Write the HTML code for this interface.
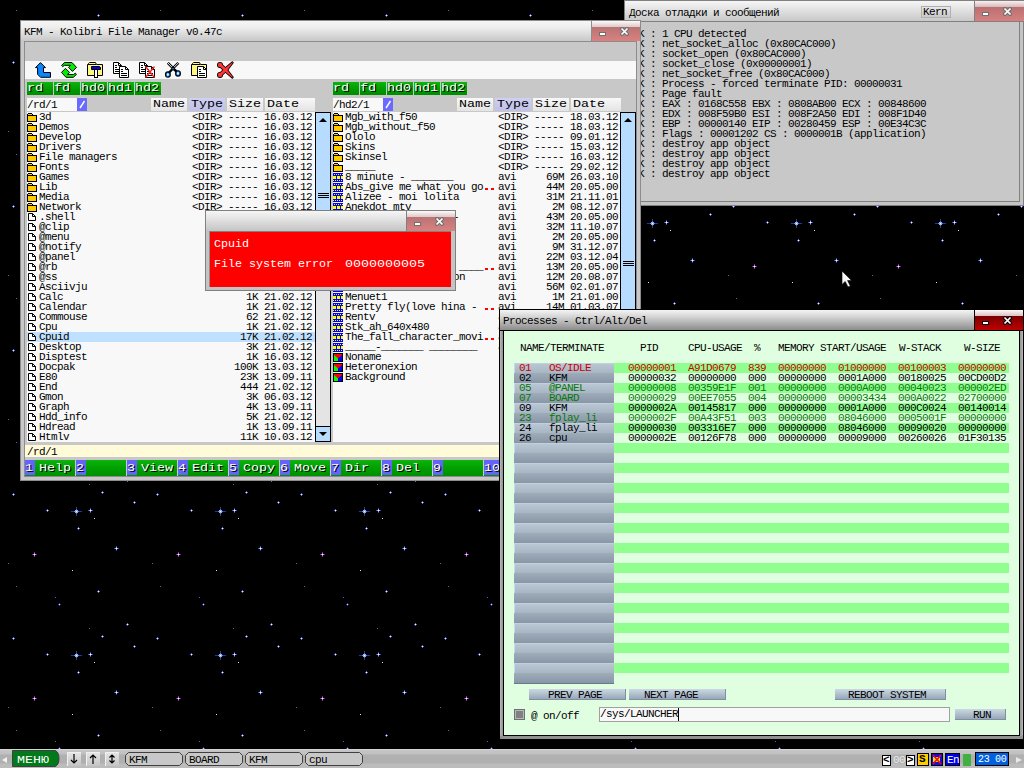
<!DOCTYPE html><html><head><meta charset="utf-8"><style>
html,body{margin:0;padding:0}
body{width:1024px;height:768px;position:relative;overflow:hidden;background:#000;font-family:"Liberation Mono",monospace;font-size:10px}
div{position:absolute;box-sizing:border-box}
.t{white-space:pre;line-height:11px;height:12px;font-size:11px;letter-spacing:-0.6px}
svg{position:absolute;display:block;overflow:visible}
.b8{color:#fff;transform:scaleX(1.3333);transform-origin:0 0;text-shadow:1px 1px 0 #000;font-size:10px;letter-spacing:0;line-height:12px}
.b7{color:#fff;transform:scaleX(1.1667);transform-origin:0 0;text-shadow:1px 1px 0 #000;font-size:10px;letter-spacing:0;line-height:12px}
</style></head><body>
<svg width="1024" height="768" style="left:0;top:0"><defs><pattern id="sky" x="0" y="0" width="144" height="144" patternUnits="userSpaceOnUse"><rect x="12" y="62" width="3" height="1" fill="#5a6ad0"/><rect x="13" y="61" width="1" height="3" fill="#5a6ad0"/><rect x="13" y="62" width="1" height="1" fill="#e8f0ff"/><rect x="89" y="52" width="1" height="1" fill="#7050c0"/><rect x="101" y="60" width="3" height="1" fill="#5a6ad0"/><rect x="102" y="59" width="1" height="3" fill="#5a6ad0"/><rect x="102" y="60" width="1" height="1" fill="#e8f0ff"/><rect x="133" y="70" width="3" height="1" fill="#5a6ad0"/><rect x="134" y="69" width="1" height="3" fill="#5a6ad0"/><rect x="134" y="70" width="1" height="1" fill="#e8f0ff"/><rect x="46" y="78" width="3" height="1" fill="#5a6ad0"/><rect x="47" y="77" width="1" height="3" fill="#5a6ad0"/><rect x="47" y="78" width="1" height="1" fill="#e8f0ff"/><rect x="71" y="79" width="11" height="1" fill="#283890"/><rect x="76" y="75" width="1" height="9" fill="#283890"/><rect x="74" y="79" width="5" height="1" fill="#6080e0"/><rect x="76" y="77" width="1" height="5" fill="#6080e0"/><rect x="75" y="78" width="3" height="3" fill="#90b0f0"/><rect x="76" y="79" width="1" height="1" fill="#f0f8ff"/><rect x="88" y="78" width="5" height="1" fill="#3a4ab0"/><rect x="90" y="76" width="1" height="5" fill="#3a4ab0"/><rect x="89" y="78" width="3" height="1" fill="#90b0ff"/><rect x="90" y="77" width="1" height="3" fill="#90b0ff"/><rect x="90" y="78" width="1" height="1" fill="#fff"/><rect x="94" y="86" width="1" height="1" fill="#e0e0ff"/><rect x="77" y="96" width="3" height="1" fill="#5a6ad0"/><rect x="78" y="95" width="1" height="3" fill="#5a6ad0"/><rect x="78" y="96" width="1" height="1" fill="#e8f0ff"/><rect x="114" y="116" width="5" height="1" fill="#3a4ab0"/><rect x="116" y="114" width="1" height="5" fill="#3a4ab0"/><rect x="115" y="116" width="3" height="1" fill="#90b0ff"/><rect x="116" y="115" width="1" height="3" fill="#90b0ff"/><rect x="116" y="116" width="1" height="1" fill="#fff"/><rect x="32" y="122" width="5" height="1" fill="#703090"/><rect x="34" y="120" width="1" height="5" fill="#703090"/><rect x="33" y="122" width="3" height="1" fill="#d080d0"/><rect x="34" y="121" width="1" height="3" fill="#d080d0"/><rect x="34" y="122" width="1" height="1" fill="#fff0ff"/><rect x="8" y="131" width="1" height="1" fill="#7050c0"/><rect x="72" y="138" width="1" height="1" fill="#e0e0ff"/><rect x="16" y="10" width="1" height="1" fill="#7050c0"/><rect x="97" y="15" width="3" height="1" fill="#5a6ad0"/><rect x="98" y="14" width="1" height="3" fill="#5a6ad0"/><rect x="98" y="15" width="1" height="1" fill="#e8f0ff"/><rect x="55" y="21" width="1" height="1" fill="#7050c0"/><rect x="58" y="28" width="3" height="1" fill="#5030a0"/><rect x="59" y="27" width="1" height="3" fill="#5030a0"/><rect x="59" y="28" width="1" height="1" fill="#d0c0ff"/><rect x="126" y="48" width="3" height="1" fill="#5a6ad0"/><rect x="127" y="47" width="1" height="3" fill="#5a6ad0"/><rect x="127" y="48" width="1" height="1" fill="#e8f0ff"/></pattern></defs><rect width="1024" height="768" fill="url(#sky)"/></svg>
<div style="left:624px;top:0px;width:400px;height:206px;background:#c4c4c4;border:1px solid #808080"></div>
<div style="left:625px;top:1px;width:399px;height:20px;background:linear-gradient(#f6f6f6,#e8e8e8 30%,#c8c8c8)"></div>
<div style="left:624px;top:21px;width:400px;height:1px;background:#808080"></div>
<div class="t" style="left:629px;top:8px;color:#000;">Доска отладки и сообщений</div>
<div style="left:921px;top:6px;width:30px;height:12px;background:linear-gradient(#e8e8e8,#c8c8c8);border:1px solid #b0b0b0"></div>
<div class="t" style="left:923px;top:7px;color:#000;">Kern</div>
<div style="left:975px;top:1px;width:49px;height:6px;background:linear-gradient(#f8f0f0,#d8b8b8)"></div>
<div style="left:975px;top:7px;width:49px;height:14px;background:linear-gradient(#b87070,#d88080)"></div>
<div style="left:974px;top:1px;width:1px;height:20px;background:#808080"></div>
<svg width="8" height="5" viewBox="0 0 8 5" style="left:982px;top:12px;"><rect x="0.5" y="0.5" width="6" height="3" fill="#fff" stroke="#707070"/></svg>
<svg width="9" height="9" viewBox="0 0 9 9" style="left:1003px;top:7px;overflow:hidden"><path d="M0.6,0.6 L8.4,8.4 M8.4,0.6 L0.6,8.4" stroke="#707070" stroke-width="3.6"/><path d="M1.5,1.5 L7.5,7.5 M7.5,1.5 L1.5,7.5" stroke="#fff" stroke-width="1.7"/></svg>
<div style="left:629px;top:22px;width:390px;height:179px;background:#c8c8c8"></div>
<div style="left:1019px;top:22px;width:1px;height:180px;background:#808080"></div>
<div style="left:629px;top:201px;width:391px;height:1px;background:#808080"></div>
<div class="t" style="left:638px;top:29px;color:#000;">K : 1 CPU detected</div>
<div class="t" style="left:638px;top:39px;color:#000;">K : net_socket_alloc (0x80CAC000)</div>
<div class="t" style="left:638px;top:49px;color:#000;">K : socket_open (0x80CAC000)</div>
<div class="t" style="left:638px;top:59px;color:#000;">K : socket_close (0x00000001)</div>
<div class="t" style="left:638px;top:69px;color:#000;">K : net_socket_free (0x80CAC000)</div>
<div class="t" style="left:638px;top:79px;color:#000;">K : Process - forced terminate PID: 00000031</div>
<div class="t" style="left:638px;top:89px;color:#000;">K : Page fault</div>
<div class="t" style="left:638px;top:99px;color:#000;">K : EAX : 0168C558 EBX : 0808AB00 ECX : 00848600</div>
<div class="t" style="left:638px;top:109px;color:#000;">K : EDX : 008F59B0 ESI : 008F2A50 EDI : 008F1D40</div>
<div class="t" style="left:638px;top:119px;color:#000;">K : EBP : 00000140 EIP : 00280459 ESP : 00E34C3C</div>
<div class="t" style="left:638px;top:129px;color:#000;">K : Flags : 00001202 CS : 0000001B (application)</div>
<div class="t" style="left:638px;top:139px;color:#000;">K : destroy app object</div>
<div class="t" style="left:638px;top:149px;color:#000;">K : destroy app object</div>
<div class="t" style="left:638px;top:159px;color:#000;">K : destroy app object</div>
<div class="t" style="left:638px;top:169px;color:#000;">K : destroy app object</div>
<div style="left:20px;top:20px;width:621px;height:461px;background:#c8c8c8;border:1px solid #8c8c8c"></div>
<div style="left:21px;top:21px;width:619px;height:20px;background:linear-gradient(#f6f6f6,#ececec 35%,#c8c8c8)"></div>
<div class="t" style="left:24px;top:27px;color:#000;">KFM - Kolibri File Manager v0.47c</div>
<div style="left:592px;top:21px;width:48px;height:6px;background:linear-gradient(#fafafa,#e0c8c8)"></div>
<div style="left:592px;top:27px;width:48px;height:14px;background:linear-gradient(#b87474,#dc8080)"></div>
<div style="left:591px;top:21px;width:1px;height:20px;background:#8c8c8c"></div>
<div style="left:24px;top:41px;width:613px;height:436px;border:1px solid #8c8c8c;background:#c8c8c8"></div>
<div style="left:25px;top:61px;width:611px;height:18px;background:#f8f8f8"></div>
<svg width="8" height="5" viewBox="0 0 8 5" style="left:599px;top:32px;"><rect x="0.5" y="0.5" width="6" height="3" fill="#fff" stroke="#707070"/></svg>
<svg width="9" height="9" viewBox="0 0 9 9" style="left:620px;top:27px;overflow:hidden"><path d="M0.6,0.6 L8.4,8.4 M8.4,0.6 L0.6,8.4" stroke="#707070" stroke-width="3.6"/><path d="M1.5,1.5 L7.5,7.5 M7.5,1.5 L1.5,7.5" stroke="#fff" stroke-width="1.7"/></svg>
<svg width="17" height="17" viewBox="0 0 17 17" style="left:35px;top:62px;"><path d="M5.5,0.6 L10.5,5.6 L8.5,5.6 L8.5,10.5 L15.5,10.5 L15.5,15.3 L5.6,15.3 L2.6,12.3 L2.6,5.6 L0.5,5.6 Z" fill="#0a84ff" stroke="#000" stroke-linejoin="miter"/></svg>
<svg width="17" height="17" viewBox="0 0 17 17" style="left:61px;top:62px;"><path d="M3.7,0.5 L11,0.5 L15.5,5.4 L11.5,9.4 L7.5,5.4 L9.6,3.3 L3.6,3.3 L1.6,4.6 L0.6,3.3 Z" fill="#00f000" stroke="#000" stroke-linejoin="miter"/><path d="M12.3,15.3 L5,15.3 L0.5,10.4 L4.5,6.4 L8.5,10.4 L6.4,12.5 L12.4,12.5 L14.4,11.2 L15.4,12.5 Z" fill="#00f000" stroke="#000" stroke-linejoin="miter"/></svg>
<svg width="17" height="17" viewBox="0 0 17 17" style="left:87px;top:62px;"><path d="M2.5,0.5 H8.5 L9.5,2.5 H15.5 V13.5 H0.5 V2.5 L1.5,1.5 Z" fill="#fff880" stroke="#000"/><path d="M1,2.5 H9" stroke="#000"/><path d="M4.5,4.5 H12.5 L13.5,5.5 V7.5 H4.5 Z" fill="#0000f0" stroke="#000"/><rect x="7.5" y="7.5" width="3" height="8" fill="#fff" stroke="#000"/></svg>
<svg width="17" height="17" viewBox="0 0 17 17" style="left:113px;top:62px;"><path d="M0.5,0.5 L5.5,0.5 L8.5,3.5 L8.5,11.5 L0.5,11.5 Z" fill="#fff" stroke="#000"/><path d="M5.5,0.5 L5.5,3.5 L8.5,3.5" fill="none" stroke="#000"/><path d="M2,3.5 h2 M2,5.5 h2 M2,7.5 h5 M2,9.5 h5" stroke="#000"/><path d="M6.5,4.5 L12.5,4.5 L15.5,7.5 L15.5,15.5 L6.5,15.5 Z" fill="#fff" stroke="#000"/><path d="M12.5,4.5 L12.5,7.5 L15.5,7.5" fill="none" stroke="#000"/><path d="M8,7.5 h2 M8,9.5 h2 M8,11.5 h6 M8,13.5 h6" stroke="#000"/></svg>
<svg width="17" height="17" viewBox="0 0 17 17" style="left:139px;top:62px;"><path d="M0.5,0.5 L5.5,0.5 L8.5,3.5 L8.5,11.5 L0.5,11.5 Z" fill="#fff" stroke="#000"/><path d="M5.5,0.5 L5.5,3.5 L8.5,3.5" fill="none" stroke="#000"/><path d="M2,3.5 h2 M2,5.5 h2 M2,7.5 h5 M2,9.5 h5" stroke="#000"/><path d="M6.5,4.5 L12.5,4.5 L15.5,7.5 L15.5,15.5 L6.5,15.5 Z" fill="#fff" stroke="#000"/><path d="M12.5,4.5 L12.5,7.5 L15.5,7.5" fill="none" stroke="#000"/><path d="M8,7.5 h2 M8,9.5 h2 M8,11.5 h6 M8,13.5 h6" stroke="#000"/><path d="M6.5,15.5 L15.5,4.5 M6.5,4.5 L15.5,15.5" stroke="#ff2020" stroke-width="1.3"/></svg>
<svg width="17" height="17" viewBox="0 0 17 17" style="left:165px;top:62px;"><path d="M2.8,0.8 L8,6.2 L13.4,0.8" fill="none" stroke="#000" stroke-width="2.6"/><path d="M2.8,0.8 L8,6.2 L13.4,0.8" fill="none" stroke="#fff" stroke-width="0.9"/><path d="M8,6.5 L3.2,11.5 M8,6.5 L12.8,10.5" stroke="#000" stroke-width="2.4"/><rect x="7" y="5" width="2" height="2.2" fill="#000"/><rect x="7" y="6.3" width="2" height="1" fill="#1088ff"/><ellipse cx="2.9" cy="12.6" rx="2.4" ry="2.7" fill="#1088ff" stroke="#000" stroke-width="1.1"/><ellipse cx="13" cy="11.4" rx="2.4" ry="2.7" fill="#1088ff" stroke="#000" stroke-width="1.1"/><ellipse cx="2.9" cy="12.6" rx="0.9" ry="1.4" fill="#fff"/><ellipse cx="13" cy="11.4" rx="0.9" ry="1.4" fill="#fff"/></svg>
<svg width="17" height="17" viewBox="0 0 17 17" style="left:191px;top:62px;"><path d="M2.5,0.5 H8.5 L9.5,2.5 H15.5 V13.5 H0.5 V2.5 L1.5,1.5 Z" fill="#fff880" stroke="#000"/><path d="M1,2.5 H9" stroke="#000"/><path d="M6.5,4.5 L12.5,4.5 L15.5,7.5 L15.5,15.5 L6.5,15.5 Z" fill="#fff" stroke="#000"/><path d="M12.5,4.5 L12.5,7.5 L15.5,7.5" fill="none" stroke="#000"/><path d="M8,7.5 h2 M8,9.5 h2 M8,11.5 h6 M8,13.5 h6" stroke="#000"/></svg>
<svg width="17" height="17" viewBox="0 0 17 17" style="left:217px;top:62px;"><path d="M3,2.8 L8.5,7.9 L3,13" fill="none" stroke="#000" stroke-width="4.4"/><circle cx="3" cy="2.9" r="3" fill="#000"/><circle cx="3" cy="12.9" r="3" fill="#000"/><path d="M7.41,6.87 L15.31,0.13 L15.89,0.67 L9.59,8.93 Z M9.60,6.88 L15.89,15.33 L15.31,15.87 L7.40,8.92 Z" fill="#000" stroke="#000" stroke-width="1.6" stroke-linejoin="round"/><path d="M3,2.8 L8.5,7.9 L3,13" fill="none" stroke="#ff3434" stroke-width="2.8"/><circle cx="3" cy="2.9" r="2.2" fill="#ff3434"/><circle cx="3" cy="12.9" r="2.2" fill="#ff3434"/><path d="M7.41,6.87 L15.31,0.13 L15.89,0.67 L9.59,8.93 Z M9.60,6.88 L15.89,15.33 L15.31,15.87 L7.40,8.92 Z" fill="#ff3434"/></svg>
<div style="left:27px;top:82px;width:26px;height:13px;background:linear-gradient(#0cb40c,#009a00 60%,#008c00)"></div>
<div class="t b8" style="left:27px;top:83px">rd</div>
<div style="left:54px;top:82px;width:26px;height:13px;background:linear-gradient(#0cb40c,#009a00 60%,#008c00)"></div>
<div class="t b8" style="left:54px;top:83px">fd</div>
<div style="left:81px;top:82px;width:26px;height:13px;background:linear-gradient(#0cb40c,#009a00 60%,#008c00)"></div>
<div class="t b8" style="left:81px;top:83px">hd0</div>
<div style="left:108px;top:82px;width:26px;height:13px;background:linear-gradient(#0cb40c,#009a00 60%,#008c00)"></div>
<div class="t b8" style="left:108px;top:83px">hd1</div>
<div style="left:135px;top:82px;width:26px;height:13px;background:linear-gradient(#0cb40c,#009a00 60%,#008c00)"></div>
<div class="t b8" style="left:135px;top:83px">hd2</div>
<div style="left:27px;top:98px;width:50px;height:13px;background:#f8f8f8"></div>
<div class="t" style="left:27px;top:100px;color:#000;">/rd/1</div>
<div style="left:77px;top:98px;width:10px;height:13px;background:#6a6aff"></div>
<svg width="7" height="9" viewBox="0 0 7 9" style="left:79px;top:100px;"><path d="M1,8 L5.5,1" stroke="#fff" stroke-width="1.4"/></svg>
<div style="left:151px;top:98px;width:37px;height:13px;background:linear-gradient(#f8f8f8,#e4e4e4);border-right:1px solid #c8c8c8"></div>
<div class="t b8" style="left:153px;top:99px;color:#000;text-shadow:none">Name</div>
<div style="left:189px;top:98px;width:37px;height:13px;background:linear-gradient(#d0d0f4,#c0c0e8);border-right:1px solid #c8c8c8"></div>
<div class="t b8" style="left:191px;top:99px;color:#000;text-shadow:none">Type</div>
<div style="left:227px;top:98px;width:37px;height:13px;background:linear-gradient(#f8f8f8,#e4e4e4);border-right:1px solid #c8c8c8"></div>
<div class="t b8" style="left:229px;top:99px;color:#000;text-shadow:none">Size</div>
<div style="left:265px;top:98px;width:51px;height:13px;background:linear-gradient(#f8f8f8,#e4e4e4);border-right:1px solid #c8c8c8"></div>
<div class="t b8" style="left:267px;top:99px;color:#000;text-shadow:none">Date</div>
<div style="left:27px;top:112px;width:288px;height:330px;background:#f8f8f8"></div>
<div style="left:315px;top:112px;width:16px;height:330px;background:#e4e4e4;border-left:1px solid #000;border-right:1px solid #000"></div>
<div style="left:315px;top:112px;width:16px;height:16px;background:#b8dcff;border:1px solid #000"></div>
<svg width="10" height="6" viewBox="0 0 10 6" style="left:318px;top:117px;"><path d="M1,5 L5,1 L9,5 Z" fill="#000"/></svg>
<div style="left:315px;top:127px;width:16px;height:136px;background:#b8dcff;border:1px solid #000;border-top:none"></div>
<div style="left:318px;top:193px;width:11px;height:1px;background:#000"></div>
<div style="left:318px;top:195px;width:11px;height:1px;background:#000"></div>
<div style="left:318px;top:197px;width:11px;height:1px;background:#000"></div>
<div style="left:315px;top:426px;width:16px;height:16px;background:#b8dcff;border:1px solid #000"></div>
<svg width="10" height="6" viewBox="0 0 10 6" style="left:318px;top:431px;"><path d="M1,1 L5,5 L9,1 Z" fill="#000"/></svg>
<svg width="10" height="9" viewBox="0 0 10 9" style="left:27px;top:113px;"><rect x="1" y="0" width="4" height="1" fill="#000"/><rect x="0" y="1" width="6" height="1" fill="#000"/><rect x="1" y="1" width="4" height="1" fill="#ffcc00"/><rect x="0" y="2" width="10" height="7" fill="#000"/><rect x="1" y="3" width="8" height="5" fill="#ffcc00"/></svg>
<div class="t" style="left:39px;top:112px;color:#000;">3d</div>
<div class="t" style="left:192px;top:112px;color:#000;">&lt;DIR&gt;</div>
<div class="t" style="left:228px;top:112px;color:#000;">-----</div>
<div class="t" style="left:264px;top:112px;color:#000;">16.03.12</div>
<svg width="10" height="9" viewBox="0 0 10 9" style="left:27px;top:123px;"><rect x="1" y="0" width="4" height="1" fill="#000"/><rect x="0" y="1" width="6" height="1" fill="#000"/><rect x="1" y="1" width="4" height="1" fill="#ffcc00"/><rect x="0" y="2" width="10" height="7" fill="#000"/><rect x="1" y="3" width="8" height="5" fill="#ffcc00"/></svg>
<div class="t" style="left:39px;top:122px;color:#000;">Demos</div>
<div class="t" style="left:192px;top:122px;color:#000;">&lt;DIR&gt;</div>
<div class="t" style="left:228px;top:122px;color:#000;">-----</div>
<div class="t" style="left:264px;top:122px;color:#000;">16.03.12</div>
<svg width="10" height="9" viewBox="0 0 10 9" style="left:27px;top:133px;"><rect x="1" y="0" width="4" height="1" fill="#000"/><rect x="0" y="1" width="6" height="1" fill="#000"/><rect x="1" y="1" width="4" height="1" fill="#ffcc00"/><rect x="0" y="2" width="10" height="7" fill="#000"/><rect x="1" y="3" width="8" height="5" fill="#ffcc00"/></svg>
<div class="t" style="left:39px;top:132px;color:#000;">Develop</div>
<div class="t" style="left:192px;top:132px;color:#000;">&lt;DIR&gt;</div>
<div class="t" style="left:228px;top:132px;color:#000;">-----</div>
<div class="t" style="left:264px;top:132px;color:#000;">16.03.12</div>
<svg width="10" height="9" viewBox="0 0 10 9" style="left:27px;top:143px;"><rect x="1" y="0" width="4" height="1" fill="#000"/><rect x="0" y="1" width="6" height="1" fill="#000"/><rect x="1" y="1" width="4" height="1" fill="#ffcc00"/><rect x="0" y="2" width="10" height="7" fill="#000"/><rect x="1" y="3" width="8" height="5" fill="#ffcc00"/></svg>
<div class="t" style="left:39px;top:142px;color:#000;">Drivers</div>
<div class="t" style="left:192px;top:142px;color:#000;">&lt;DIR&gt;</div>
<div class="t" style="left:228px;top:142px;color:#000;">-----</div>
<div class="t" style="left:264px;top:142px;color:#000;">16.03.12</div>
<svg width="10" height="9" viewBox="0 0 10 9" style="left:27px;top:153px;"><rect x="1" y="0" width="4" height="1" fill="#000"/><rect x="0" y="1" width="6" height="1" fill="#000"/><rect x="1" y="1" width="4" height="1" fill="#ffcc00"/><rect x="0" y="2" width="10" height="7" fill="#000"/><rect x="1" y="3" width="8" height="5" fill="#ffcc00"/></svg>
<div class="t" style="left:39px;top:152px;color:#000;">File managers</div>
<div class="t" style="left:192px;top:152px;color:#000;">&lt;DIR&gt;</div>
<div class="t" style="left:228px;top:152px;color:#000;">-----</div>
<div class="t" style="left:264px;top:152px;color:#000;">16.03.12</div>
<svg width="10" height="9" viewBox="0 0 10 9" style="left:27px;top:163px;"><rect x="1" y="0" width="4" height="1" fill="#000"/><rect x="0" y="1" width="6" height="1" fill="#000"/><rect x="1" y="1" width="4" height="1" fill="#ffcc00"/><rect x="0" y="2" width="10" height="7" fill="#000"/><rect x="1" y="3" width="8" height="5" fill="#ffcc00"/></svg>
<div class="t" style="left:39px;top:162px;color:#000;">Fonts</div>
<div class="t" style="left:192px;top:162px;color:#000;">&lt;DIR&gt;</div>
<div class="t" style="left:228px;top:162px;color:#000;">-----</div>
<div class="t" style="left:264px;top:162px;color:#000;">16.03.12</div>
<svg width="10" height="9" viewBox="0 0 10 9" style="left:27px;top:173px;"><rect x="1" y="0" width="4" height="1" fill="#000"/><rect x="0" y="1" width="6" height="1" fill="#000"/><rect x="1" y="1" width="4" height="1" fill="#ffcc00"/><rect x="0" y="2" width="10" height="7" fill="#000"/><rect x="1" y="3" width="8" height="5" fill="#ffcc00"/></svg>
<div class="t" style="left:39px;top:172px;color:#000;">Games</div>
<div class="t" style="left:192px;top:172px;color:#000;">&lt;DIR&gt;</div>
<div class="t" style="left:228px;top:172px;color:#000;">-----</div>
<div class="t" style="left:264px;top:172px;color:#000;">16.03.12</div>
<svg width="10" height="9" viewBox="0 0 10 9" style="left:27px;top:183px;"><rect x="1" y="0" width="4" height="1" fill="#000"/><rect x="0" y="1" width="6" height="1" fill="#000"/><rect x="1" y="1" width="4" height="1" fill="#ffcc00"/><rect x="0" y="2" width="10" height="7" fill="#000"/><rect x="1" y="3" width="8" height="5" fill="#ffcc00"/></svg>
<div class="t" style="left:39px;top:182px;color:#000;">Lib</div>
<div class="t" style="left:192px;top:182px;color:#000;">&lt;DIR&gt;</div>
<div class="t" style="left:228px;top:182px;color:#000;">-----</div>
<div class="t" style="left:264px;top:182px;color:#000;">16.03.12</div>
<svg width="10" height="9" viewBox="0 0 10 9" style="left:27px;top:193px;"><rect x="1" y="0" width="4" height="1" fill="#000"/><rect x="0" y="1" width="6" height="1" fill="#000"/><rect x="1" y="1" width="4" height="1" fill="#ffcc00"/><rect x="0" y="2" width="10" height="7" fill="#000"/><rect x="1" y="3" width="8" height="5" fill="#ffcc00"/></svg>
<div class="t" style="left:39px;top:192px;color:#000;">Media</div>
<div class="t" style="left:192px;top:192px;color:#000;">&lt;DIR&gt;</div>
<div class="t" style="left:228px;top:192px;color:#000;">-----</div>
<div class="t" style="left:264px;top:192px;color:#000;">16.03.12</div>
<svg width="10" height="9" viewBox="0 0 10 9" style="left:27px;top:203px;"><rect x="1" y="0" width="4" height="1" fill="#000"/><rect x="0" y="1" width="6" height="1" fill="#000"/><rect x="1" y="1" width="4" height="1" fill="#ffcc00"/><rect x="0" y="2" width="10" height="7" fill="#000"/><rect x="1" y="3" width="8" height="5" fill="#ffcc00"/></svg>
<div class="t" style="left:39px;top:202px;color:#000;">Network</div>
<div class="t" style="left:192px;top:202px;color:#000;">&lt;DIR&gt;</div>
<div class="t" style="left:228px;top:202px;color:#000;">-----</div>
<div class="t" style="left:264px;top:202px;color:#000;">16.03.12</div>
<svg width="8" height="8" viewBox="0 0 8 8" style="left:28px;top:213px;"><path d="M0.5,0.5 L4.5,0.5 L7.5,3.5 L7.5,7.5 L0.5,7.5 Z" fill="#fff" stroke="#000" stroke-linejoin="miter"/><path d="M4.5,0.5 L4.5,3.5 L7.5,3.5" fill="none" stroke="#000"/></svg>
<div class="t" style="left:39px;top:212px;color:#000;">.shell</div>
<svg width="8" height="8" viewBox="0 0 8 8" style="left:28px;top:223px;"><path d="M0.5,0.5 L4.5,0.5 L7.5,3.5 L7.5,7.5 L0.5,7.5 Z" fill="#fff" stroke="#000" stroke-linejoin="miter"/><path d="M4.5,0.5 L4.5,3.5 L7.5,3.5" fill="none" stroke="#000"/></svg>
<div class="t" style="left:39px;top:222px;color:#000;">@clip</div>
<svg width="8" height="8" viewBox="0 0 8 8" style="left:28px;top:233px;"><path d="M0.5,0.5 L4.5,0.5 L7.5,3.5 L7.5,7.5 L0.5,7.5 Z" fill="#fff" stroke="#000" stroke-linejoin="miter"/><path d="M4.5,0.5 L4.5,3.5 L7.5,3.5" fill="none" stroke="#000"/></svg>
<div class="t" style="left:39px;top:232px;color:#000;">@menu</div>
<svg width="8" height="8" viewBox="0 0 8 8" style="left:28px;top:243px;"><path d="M0.5,0.5 L4.5,0.5 L7.5,3.5 L7.5,7.5 L0.5,7.5 Z" fill="#fff" stroke="#000" stroke-linejoin="miter"/><path d="M4.5,0.5 L4.5,3.5 L7.5,3.5" fill="none" stroke="#000"/></svg>
<div class="t" style="left:39px;top:242px;color:#000;">@notify</div>
<svg width="8" height="8" viewBox="0 0 8 8" style="left:28px;top:253px;"><path d="M0.5,0.5 L4.5,0.5 L7.5,3.5 L7.5,7.5 L0.5,7.5 Z" fill="#fff" stroke="#000" stroke-linejoin="miter"/><path d="M4.5,0.5 L4.5,3.5 L7.5,3.5" fill="none" stroke="#000"/></svg>
<div class="t" style="left:39px;top:252px;color:#000;">@panel</div>
<svg width="8" height="8" viewBox="0 0 8 8" style="left:28px;top:263px;"><path d="M0.5,0.5 L4.5,0.5 L7.5,3.5 L7.5,7.5 L0.5,7.5 Z" fill="#fff" stroke="#000" stroke-linejoin="miter"/><path d="M4.5,0.5 L4.5,3.5 L7.5,3.5" fill="none" stroke="#000"/></svg>
<div class="t" style="left:39px;top:262px;color:#000;">@rb</div>
<svg width="8" height="8" viewBox="0 0 8 8" style="left:28px;top:273px;"><path d="M0.5,0.5 L4.5,0.5 L7.5,3.5 L7.5,7.5 L0.5,7.5 Z" fill="#fff" stroke="#000" stroke-linejoin="miter"/><path d="M4.5,0.5 L4.5,3.5 L7.5,3.5" fill="none" stroke="#000"/></svg>
<div class="t" style="left:39px;top:272px;color:#000;">@ss</div>
<svg width="8" height="8" viewBox="0 0 8 8" style="left:28px;top:283px;"><path d="M0.5,0.5 L4.5,0.5 L7.5,3.5 L7.5,7.5 L0.5,7.5 Z" fill="#fff" stroke="#000" stroke-linejoin="miter"/><path d="M4.5,0.5 L4.5,3.5 L7.5,3.5" fill="none" stroke="#000"/></svg>
<div class="t" style="left:39px;top:282px;color:#000;">Asciivju</div>
<svg width="8" height="8" viewBox="0 0 8 8" style="left:28px;top:293px;"><path d="M0.5,0.5 L4.5,0.5 L7.5,3.5 L7.5,7.5 L0.5,7.5 Z" fill="#fff" stroke="#000" stroke-linejoin="miter"/><path d="M4.5,0.5 L4.5,3.5 L7.5,3.5" fill="none" stroke="#000"/></svg>
<div class="t" style="left:39px;top:292px;color:#000;">Calc</div>
<div class="t" style="left:228px;top:292px;color:#000;">   1K</div>
<div class="t" style="left:264px;top:292px;color:#000;">21.02.12</div>
<svg width="8" height="8" viewBox="0 0 8 8" style="left:28px;top:303px;"><path d="M0.5,0.5 L4.5,0.5 L7.5,3.5 L7.5,7.5 L0.5,7.5 Z" fill="#fff" stroke="#000" stroke-linejoin="miter"/><path d="M4.5,0.5 L4.5,3.5 L7.5,3.5" fill="none" stroke="#000"/></svg>
<div class="t" style="left:39px;top:302px;color:#000;">Calendar</div>
<div class="t" style="left:228px;top:302px;color:#000;">   1K</div>
<div class="t" style="left:264px;top:302px;color:#000;">21.02.12</div>
<svg width="8" height="8" viewBox="0 0 8 8" style="left:28px;top:313px;"><path d="M0.5,0.5 L4.5,0.5 L7.5,3.5 L7.5,7.5 L0.5,7.5 Z" fill="#fff" stroke="#000" stroke-linejoin="miter"/><path d="M4.5,0.5 L4.5,3.5 L7.5,3.5" fill="none" stroke="#000"/></svg>
<div class="t" style="left:39px;top:312px;color:#000;">Commouse</div>
<div class="t" style="left:228px;top:312px;color:#000;">   62</div>
<div class="t" style="left:264px;top:312px;color:#000;">21.02.12</div>
<svg width="8" height="8" viewBox="0 0 8 8" style="left:28px;top:323px;"><path d="M0.5,0.5 L4.5,0.5 L7.5,3.5 L7.5,7.5 L0.5,7.5 Z" fill="#fff" stroke="#000" stroke-linejoin="miter"/><path d="M4.5,0.5 L4.5,3.5 L7.5,3.5" fill="none" stroke="#000"/></svg>
<div class="t" style="left:39px;top:322px;color:#000;">Cpu</div>
<div class="t" style="left:228px;top:322px;color:#000;">   1K</div>
<div class="t" style="left:264px;top:322px;color:#000;">21.02.12</div>
<div style="left:27px;top:332px;width:288px;height:10px;background:#c0e0ff"></div>
<svg width="8" height="8" viewBox="0 0 8 8" style="left:28px;top:333px;"><path d="M0.5,0.5 L4.5,0.5 L7.5,3.5 L7.5,7.5 L0.5,7.5 Z" fill="#fff" stroke="#000" stroke-linejoin="miter"/><path d="M4.5,0.5 L4.5,3.5 L7.5,3.5" fill="none" stroke="#000"/></svg>
<div class="t" style="left:39px;top:332px;color:#000;">Cpuid</div>
<div class="t" style="left:228px;top:332px;color:#000;">  17K</div>
<div class="t" style="left:264px;top:332px;color:#000;">21.02.12</div>
<svg width="8" height="8" viewBox="0 0 8 8" style="left:28px;top:343px;"><path d="M0.5,0.5 L4.5,0.5 L7.5,3.5 L7.5,7.5 L0.5,7.5 Z" fill="#fff" stroke="#000" stroke-linejoin="miter"/><path d="M4.5,0.5 L4.5,3.5 L7.5,3.5" fill="none" stroke="#000"/></svg>
<div class="t" style="left:39px;top:342px;color:#000;">Desktop</div>
<div class="t" style="left:228px;top:342px;color:#000;">   3K</div>
<div class="t" style="left:264px;top:342px;color:#000;">21.02.12</div>
<svg width="8" height="8" viewBox="0 0 8 8" style="left:28px;top:353px;"><path d="M0.5,0.5 L4.5,0.5 L7.5,3.5 L7.5,7.5 L0.5,7.5 Z" fill="#fff" stroke="#000" stroke-linejoin="miter"/><path d="M4.5,0.5 L4.5,3.5 L7.5,3.5" fill="none" stroke="#000"/></svg>
<div class="t" style="left:39px;top:352px;color:#000;">Disptest</div>
<div class="t" style="left:228px;top:352px;color:#000;">   1K</div>
<div class="t" style="left:264px;top:352px;color:#000;">16.03.12</div>
<svg width="8" height="8" viewBox="0 0 8 8" style="left:28px;top:363px;"><path d="M0.5,0.5 L4.5,0.5 L7.5,3.5 L7.5,7.5 L0.5,7.5 Z" fill="#fff" stroke="#000" stroke-linejoin="miter"/><path d="M4.5,0.5 L4.5,3.5 L7.5,3.5" fill="none" stroke="#000"/></svg>
<div class="t" style="left:39px;top:362px;color:#000;">Docpak</div>
<div class="t" style="left:228px;top:362px;color:#000;"> 100K</div>
<div class="t" style="left:264px;top:362px;color:#000;">13.03.12</div>
<svg width="8" height="8" viewBox="0 0 8 8" style="left:28px;top:373px;"><path d="M0.5,0.5 L4.5,0.5 L7.5,3.5 L7.5,7.5 L0.5,7.5 Z" fill="#fff" stroke="#000" stroke-linejoin="miter"/><path d="M4.5,0.5 L4.5,3.5 L7.5,3.5" fill="none" stroke="#000"/></svg>
<div class="t" style="left:39px;top:372px;color:#000;">E80</div>
<div class="t" style="left:228px;top:372px;color:#000;">  23K</div>
<div class="t" style="left:264px;top:372px;color:#000;">13.09.11</div>
<svg width="8" height="8" viewBox="0 0 8 8" style="left:28px;top:383px;"><path d="M0.5,0.5 L4.5,0.5 L7.5,3.5 L7.5,7.5 L0.5,7.5 Z" fill="#fff" stroke="#000" stroke-linejoin="miter"/><path d="M4.5,0.5 L4.5,3.5 L7.5,3.5" fill="none" stroke="#000"/></svg>
<div class="t" style="left:39px;top:382px;color:#000;">End</div>
<div class="t" style="left:228px;top:382px;color:#000;">  444</div>
<div class="t" style="left:264px;top:382px;color:#000;">21.02.12</div>
<svg width="8" height="8" viewBox="0 0 8 8" style="left:28px;top:393px;"><path d="M0.5,0.5 L4.5,0.5 L7.5,3.5 L7.5,7.5 L0.5,7.5 Z" fill="#fff" stroke="#000" stroke-linejoin="miter"/><path d="M4.5,0.5 L4.5,3.5 L7.5,3.5" fill="none" stroke="#000"/></svg>
<div class="t" style="left:39px;top:392px;color:#000;">Gmon</div>
<div class="t" style="left:228px;top:392px;color:#000;">   3K</div>
<div class="t" style="left:264px;top:392px;color:#000;">06.03.12</div>
<svg width="8" height="8" viewBox="0 0 8 8" style="left:28px;top:403px;"><path d="M0.5,0.5 L4.5,0.5 L7.5,3.5 L7.5,7.5 L0.5,7.5 Z" fill="#fff" stroke="#000" stroke-linejoin="miter"/><path d="M4.5,0.5 L4.5,3.5 L7.5,3.5" fill="none" stroke="#000"/></svg>
<div class="t" style="left:39px;top:402px;color:#000;">Graph</div>
<div class="t" style="left:228px;top:402px;color:#000;">   4K</div>
<div class="t" style="left:264px;top:402px;color:#000;">13.09.11</div>
<svg width="8" height="8" viewBox="0 0 8 8" style="left:28px;top:413px;"><path d="M0.5,0.5 L4.5,0.5 L7.5,3.5 L7.5,7.5 L0.5,7.5 Z" fill="#fff" stroke="#000" stroke-linejoin="miter"/><path d="M4.5,0.5 L4.5,3.5 L7.5,3.5" fill="none" stroke="#000"/></svg>
<div class="t" style="left:39px;top:412px;color:#000;">Hdd_info</div>
<div class="t" style="left:228px;top:412px;color:#000;">   5K</div>
<div class="t" style="left:264px;top:412px;color:#000;">21.02.12</div>
<svg width="8" height="8" viewBox="0 0 8 8" style="left:28px;top:423px;"><path d="M0.5,0.5 L4.5,0.5 L7.5,3.5 L7.5,7.5 L0.5,7.5 Z" fill="#fff" stroke="#000" stroke-linejoin="miter"/><path d="M4.5,0.5 L4.5,3.5 L7.5,3.5" fill="none" stroke="#000"/></svg>
<div class="t" style="left:39px;top:422px;color:#000;">Hdread</div>
<div class="t" style="left:228px;top:422px;color:#000;">   1K</div>
<div class="t" style="left:264px;top:422px;color:#000;">13.09.11</div>
<svg width="8" height="8" viewBox="0 0 8 8" style="left:28px;top:433px;"><path d="M0.5,0.5 L4.5,0.5 L7.5,3.5 L7.5,7.5 L0.5,7.5 Z" fill="#fff" stroke="#000" stroke-linejoin="miter"/><path d="M4.5,0.5 L4.5,3.5 L7.5,3.5" fill="none" stroke="#000"/></svg>
<div class="t" style="left:39px;top:432px;color:#000;">Htmlv</div>
<div class="t" style="left:228px;top:432px;color:#000;">  11K</div>
<div class="t" style="left:264px;top:432px;color:#000;">10.03.12</div>
<div style="left:333px;top:82px;width:26px;height:13px;background:linear-gradient(#0cb40c,#009a00 60%,#008c00)"></div>
<div class="t b8" style="left:333px;top:83px">rd</div>
<div style="left:360px;top:82px;width:26px;height:13px;background:linear-gradient(#0cb40c,#009a00 60%,#008c00)"></div>
<div class="t b8" style="left:360px;top:83px">fd</div>
<div style="left:387px;top:82px;width:26px;height:13px;background:linear-gradient(#0cb40c,#009a00 60%,#008c00)"></div>
<div class="t b8" style="left:387px;top:83px">hd0</div>
<div style="left:414px;top:82px;width:26px;height:13px;background:linear-gradient(#0cb40c,#009a00 60%,#008c00)"></div>
<div class="t b8" style="left:414px;top:83px">hd1</div>
<div style="left:441px;top:82px;width:26px;height:13px;background:linear-gradient(#0cb40c,#009a00 60%,#008c00)"></div>
<div class="t b8" style="left:441px;top:83px">hd2</div>
<div style="left:333px;top:98px;width:50px;height:13px;background:#f8f8f8"></div>
<div class="t" style="left:333px;top:100px;color:#000;">/hd2/1</div>
<div style="left:383px;top:98px;width:10px;height:13px;background:#6a6aff"></div>
<svg width="7" height="9" viewBox="0 0 7 9" style="left:385px;top:100px;"><path d="M1,8 L5.5,1" stroke="#fff" stroke-width="1.4"/></svg>
<div style="left:457px;top:98px;width:37px;height:13px;background:linear-gradient(#f8f8f8,#e4e4e4);border-right:1px solid #c8c8c8"></div>
<div class="t b8" style="left:459px;top:99px;color:#000;text-shadow:none">Name</div>
<div style="left:495px;top:98px;width:37px;height:13px;background:linear-gradient(#d0d0f4,#c0c0e8);border-right:1px solid #c8c8c8"></div>
<div class="t b8" style="left:497px;top:99px;color:#000;text-shadow:none">Type</div>
<div style="left:533px;top:98px;width:37px;height:13px;background:linear-gradient(#f8f8f8,#e4e4e4);border-right:1px solid #c8c8c8"></div>
<div class="t b8" style="left:535px;top:99px;color:#000;text-shadow:none">Size</div>
<div style="left:571px;top:98px;width:51px;height:13px;background:linear-gradient(#f8f8f8,#e4e4e4);border-right:1px solid #c8c8c8"></div>
<div class="t b8" style="left:573px;top:99px;color:#000;text-shadow:none">Date</div>
<div style="left:333px;top:112px;width:288px;height:330px;background:#f8f8f8"></div>
<div style="left:620px;top:112px;width:16px;height:330px;background:#e4e4e4;border-left:1px solid #000;border-right:1px solid #000"></div>
<div style="left:620px;top:112px;width:16px;height:16px;background:#b8dcff;border:1px solid #000"></div>
<svg width="10" height="6" viewBox="0 0 10 6" style="left:623px;top:117px;"><path d="M1,5 L5,1 L9,5 Z" fill="#000"/></svg>
<div style="left:620px;top:127px;width:16px;height:273px;background:#b8dcff;border:1px solid #000;border-top:none"></div>
<div style="left:623px;top:261px;width:11px;height:1px;background:#000"></div>
<div style="left:623px;top:263px;width:11px;height:1px;background:#000"></div>
<div style="left:623px;top:265px;width:11px;height:1px;background:#000"></div>
<div style="left:620px;top:426px;width:16px;height:16px;background:#b8dcff;border:1px solid #000"></div>
<svg width="10" height="6" viewBox="0 0 10 6" style="left:623px;top:431px;"><path d="M1,1 L5,5 L9,1 Z" fill="#000"/></svg>
<svg width="10" height="9" viewBox="0 0 10 9" style="left:333px;top:113px;"><rect x="1" y="0" width="4" height="1" fill="#000"/><rect x="0" y="1" width="6" height="1" fill="#000"/><rect x="1" y="1" width="4" height="1" fill="#ffcc00"/><rect x="0" y="2" width="10" height="7" fill="#000"/><rect x="1" y="3" width="8" height="5" fill="#ffcc00"/></svg>
<div class="t" style="left:345px;top:112px;color:#000;">Mgb_with_f50</div>
<div class="t" style="left:498px;top:112px;color:#000;">&lt;DIR&gt;</div>
<div class="t" style="left:534px;top:112px;color:#000;">-----</div>
<div class="t" style="left:570px;top:112px;color:#000;">18.03.12</div>
<svg width="10" height="9" viewBox="0 0 10 9" style="left:333px;top:123px;"><rect x="1" y="0" width="4" height="1" fill="#000"/><rect x="0" y="1" width="6" height="1" fill="#000"/><rect x="1" y="1" width="4" height="1" fill="#ffcc00"/><rect x="0" y="2" width="10" height="7" fill="#000"/><rect x="1" y="3" width="8" height="5" fill="#ffcc00"/></svg>
<div class="t" style="left:345px;top:122px;color:#000;">Mgb_without_f50</div>
<div class="t" style="left:498px;top:122px;color:#000;">&lt;DIR&gt;</div>
<div class="t" style="left:534px;top:122px;color:#000;">-----</div>
<div class="t" style="left:570px;top:122px;color:#000;">18.03.12</div>
<svg width="10" height="9" viewBox="0 0 10 9" style="left:333px;top:133px;"><rect x="1" y="0" width="4" height="1" fill="#000"/><rect x="0" y="1" width="6" height="1" fill="#000"/><rect x="1" y="1" width="4" height="1" fill="#ffcc00"/><rect x="0" y="2" width="10" height="7" fill="#000"/><rect x="1" y="3" width="8" height="5" fill="#ffcc00"/></svg>
<div class="t" style="left:345px;top:132px;color:#000;">Ololo</div>
<div class="t" style="left:498px;top:132px;color:#000;">&lt;DIR&gt;</div>
<div class="t" style="left:534px;top:132px;color:#000;">-----</div>
<div class="t" style="left:570px;top:132px;color:#000;">09.01.12</div>
<svg width="10" height="9" viewBox="0 0 10 9" style="left:333px;top:143px;"><rect x="1" y="0" width="4" height="1" fill="#000"/><rect x="0" y="1" width="6" height="1" fill="#000"/><rect x="1" y="1" width="4" height="1" fill="#ffcc00"/><rect x="0" y="2" width="10" height="7" fill="#000"/><rect x="1" y="3" width="8" height="5" fill="#ffcc00"/></svg>
<div class="t" style="left:345px;top:142px;color:#000;">Skins</div>
<div class="t" style="left:498px;top:142px;color:#000;">&lt;DIR&gt;</div>
<div class="t" style="left:534px;top:142px;color:#000;">-----</div>
<div class="t" style="left:570px;top:142px;color:#000;">15.03.12</div>
<svg width="10" height="9" viewBox="0 0 10 9" style="left:333px;top:153px;"><rect x="1" y="0" width="4" height="1" fill="#000"/><rect x="0" y="1" width="6" height="1" fill="#000"/><rect x="1" y="1" width="4" height="1" fill="#ffcc00"/><rect x="0" y="2" width="10" height="7" fill="#000"/><rect x="1" y="3" width="8" height="5" fill="#ffcc00"/></svg>
<div class="t" style="left:345px;top:152px;color:#000;">Skinsel</div>
<div class="t" style="left:498px;top:152px;color:#000;">&lt;DIR&gt;</div>
<div class="t" style="left:534px;top:152px;color:#000;">-----</div>
<div class="t" style="left:570px;top:152px;color:#000;">16.03.12</div>
<svg width="10" height="9" viewBox="0 0 10 9" style="left:333px;top:163px;"><rect x="1" y="0" width="4" height="1" fill="#000"/><rect x="0" y="1" width="6" height="1" fill="#000"/><rect x="1" y="1" width="4" height="1" fill="#ffcc00"/><rect x="0" y="2" width="10" height="7" fill="#000"/><rect x="1" y="3" width="8" height="5" fill="#ffcc00"/></svg>
<div class="t" style="left:345px;top:162px;color:#000;">_____</div>
<div class="t" style="left:498px;top:162px;color:#000;">&lt;DIR&gt;</div>
<div class="t" style="left:534px;top:162px;color:#000;">-----</div>
<div class="t" style="left:570px;top:162px;color:#000;">29.02.12</div>
<svg width="10" height="9" viewBox="0 0 10 9" style="left:333px;top:173px;"><rect x="0" y="0" width="10" height="9" fill="#0000ff"/><rect x="1" y="1" width="1" height="1" fill="#ffff00"/><rect x="3" y="1" width="1" height="1" fill="#ffff00"/><rect x="5" y="1" width="1" height="1" fill="#ffff00"/><rect x="7" y="1" width="1" height="1" fill="#ffff00"/><rect x="9" y="1" width="1" height="1" fill="#ffff00"/><rect x="0" y="7" width="1" height="1" fill="#ffff00"/><rect x="2" y="7" width="1" height="1" fill="#ffff00"/><rect x="4" y="7" width="1" height="1" fill="#ffff00"/><rect x="6" y="7" width="1" height="1" fill="#ffff00"/><rect x="8" y="7" width="1" height="1" fill="#ffff00"/><rect x="0" y="3" width="3" height="3" fill="#ffff00"/><rect x="4" y="3" width="3" height="3" fill="#ffff00"/><rect x="8" y="3" width="2" height="3" fill="#ffff00"/></svg>
<div class="t" style="left:345px;top:172px;color:#000;">8 minute - _______</div>
<div class="t" style="left:498px;top:172px;color:#000;">avi</div>
<div class="t" style="left:534px;top:172px;color:#000;">  69M</div>
<div class="t" style="left:570px;top:172px;color:#000;">26.03.10</div>
<svg width="10" height="9" viewBox="0 0 10 9" style="left:333px;top:183px;"><rect x="0" y="0" width="10" height="9" fill="#0000ff"/><rect x="1" y="1" width="1" height="1" fill="#ffff00"/><rect x="3" y="1" width="1" height="1" fill="#ffff00"/><rect x="5" y="1" width="1" height="1" fill="#ffff00"/><rect x="7" y="1" width="1" height="1" fill="#ffff00"/><rect x="9" y="1" width="1" height="1" fill="#ffff00"/><rect x="0" y="7" width="1" height="1" fill="#ffff00"/><rect x="2" y="7" width="1" height="1" fill="#ffff00"/><rect x="4" y="7" width="1" height="1" fill="#ffff00"/><rect x="6" y="7" width="1" height="1" fill="#ffff00"/><rect x="8" y="7" width="1" height="1" fill="#ffff00"/><rect x="0" y="3" width="3" height="3" fill="#ffff00"/><rect x="4" y="3" width="3" height="3" fill="#ffff00"/><rect x="8" y="3" width="2" height="3" fill="#ffff00"/></svg>
<div class="t" style="left:345px;top:182px;color:#000;">Abs_give me what you go</div>
<div style="left:485px;top:188px;width:3px;height:2px;background:#f00"></div>
<div style="left:491px;top:188px;width:3px;height:2px;background:#f00"></div>
<div class="t" style="left:498px;top:182px;color:#000;">avi</div>
<div class="t" style="left:534px;top:182px;color:#000;">  44M</div>
<div class="t" style="left:570px;top:182px;color:#000;">20.05.00</div>
<svg width="10" height="9" viewBox="0 0 10 9" style="left:333px;top:193px;"><rect x="0" y="0" width="10" height="9" fill="#0000ff"/><rect x="1" y="1" width="1" height="1" fill="#ffff00"/><rect x="3" y="1" width="1" height="1" fill="#ffff00"/><rect x="5" y="1" width="1" height="1" fill="#ffff00"/><rect x="7" y="1" width="1" height="1" fill="#ffff00"/><rect x="9" y="1" width="1" height="1" fill="#ffff00"/><rect x="0" y="7" width="1" height="1" fill="#ffff00"/><rect x="2" y="7" width="1" height="1" fill="#ffff00"/><rect x="4" y="7" width="1" height="1" fill="#ffff00"/><rect x="6" y="7" width="1" height="1" fill="#ffff00"/><rect x="8" y="7" width="1" height="1" fill="#ffff00"/><rect x="0" y="3" width="3" height="3" fill="#ffff00"/><rect x="4" y="3" width="3" height="3" fill="#ffff00"/><rect x="8" y="3" width="2" height="3" fill="#ffff00"/></svg>
<div class="t" style="left:345px;top:192px;color:#000;">Alizee - moi lolita</div>
<div class="t" style="left:498px;top:192px;color:#000;">avi</div>
<div class="t" style="left:534px;top:192px;color:#000;">  31M</div>
<div class="t" style="left:570px;top:192px;color:#000;">21.11.01</div>
<svg width="10" height="9" viewBox="0 0 10 9" style="left:333px;top:203px;"><rect x="0" y="0" width="10" height="9" fill="#0000ff"/><rect x="1" y="1" width="1" height="1" fill="#ffff00"/><rect x="3" y="1" width="1" height="1" fill="#ffff00"/><rect x="5" y="1" width="1" height="1" fill="#ffff00"/><rect x="7" y="1" width="1" height="1" fill="#ffff00"/><rect x="9" y="1" width="1" height="1" fill="#ffff00"/><rect x="0" y="7" width="1" height="1" fill="#ffff00"/><rect x="2" y="7" width="1" height="1" fill="#ffff00"/><rect x="4" y="7" width="1" height="1" fill="#ffff00"/><rect x="6" y="7" width="1" height="1" fill="#ffff00"/><rect x="8" y="7" width="1" height="1" fill="#ffff00"/><rect x="0" y="3" width="3" height="3" fill="#ffff00"/><rect x="4" y="3" width="3" height="3" fill="#ffff00"/><rect x="8" y="3" width="2" height="3" fill="#ffff00"/></svg>
<div class="t" style="left:345px;top:202px;color:#000;">Anekdot mtv</div>
<div class="t" style="left:498px;top:202px;color:#000;">avi</div>
<div class="t" style="left:534px;top:202px;color:#000;">   2M</div>
<div class="t" style="left:570px;top:202px;color:#000;">08.12.07</div>
<svg width="10" height="9" viewBox="0 0 10 9" style="left:333px;top:213px;"><rect x="0" y="0" width="10" height="9" fill="#0000ff"/><rect x="1" y="1" width="1" height="1" fill="#ffff00"/><rect x="3" y="1" width="1" height="1" fill="#ffff00"/><rect x="5" y="1" width="1" height="1" fill="#ffff00"/><rect x="7" y="1" width="1" height="1" fill="#ffff00"/><rect x="9" y="1" width="1" height="1" fill="#ffff00"/><rect x="0" y="7" width="1" height="1" fill="#ffff00"/><rect x="2" y="7" width="1" height="1" fill="#ffff00"/><rect x="4" y="7" width="1" height="1" fill="#ffff00"/><rect x="6" y="7" width="1" height="1" fill="#ffff00"/><rect x="8" y="7" width="1" height="1" fill="#ffff00"/><rect x="0" y="3" width="3" height="3" fill="#ffff00"/><rect x="4" y="3" width="3" height="3" fill="#ffff00"/><rect x="8" y="3" width="2" height="3" fill="#ffff00"/></svg>
<div class="t" style="left:345px;top:212px;color:#000;">Avatar ___________-</div>
<div class="t" style="left:498px;top:212px;color:#000;">avi</div>
<div class="t" style="left:534px;top:212px;color:#000;">  43M</div>
<div class="t" style="left:570px;top:212px;color:#000;">20.05.00</div>
<svg width="10" height="9" viewBox="0 0 10 9" style="left:333px;top:223px;"><rect x="0" y="0" width="10" height="9" fill="#0000ff"/><rect x="1" y="1" width="1" height="1" fill="#ffff00"/><rect x="3" y="1" width="1" height="1" fill="#ffff00"/><rect x="5" y="1" width="1" height="1" fill="#ffff00"/><rect x="7" y="1" width="1" height="1" fill="#ffff00"/><rect x="9" y="1" width="1" height="1" fill="#ffff00"/><rect x="0" y="7" width="1" height="1" fill="#ffff00"/><rect x="2" y="7" width="1" height="1" fill="#ffff00"/><rect x="4" y="7" width="1" height="1" fill="#ffff00"/><rect x="6" y="7" width="1" height="1" fill="#ffff00"/><rect x="8" y="7" width="1" height="1" fill="#ffff00"/><rect x="0" y="3" width="3" height="3" fill="#ffff00"/><rect x="4" y="3" width="3" height="3" fill="#ffff00"/><rect x="8" y="3" width="2" height="3" fill="#ffff00"/></svg>
<div class="t" style="left:345px;top:222px;color:#000;">Best_____________</div>
<div class="t" style="left:498px;top:222px;color:#000;">avi</div>
<div class="t" style="left:534px;top:222px;color:#000;">  32M</div>
<div class="t" style="left:570px;top:222px;color:#000;">11.10.07</div>
<svg width="10" height="9" viewBox="0 0 10 9" style="left:333px;top:233px;"><rect x="0" y="0" width="10" height="9" fill="#0000ff"/><rect x="1" y="1" width="1" height="1" fill="#ffff00"/><rect x="3" y="1" width="1" height="1" fill="#ffff00"/><rect x="5" y="1" width="1" height="1" fill="#ffff00"/><rect x="7" y="1" width="1" height="1" fill="#ffff00"/><rect x="9" y="1" width="1" height="1" fill="#ffff00"/><rect x="0" y="7" width="1" height="1" fill="#ffff00"/><rect x="2" y="7" width="1" height="1" fill="#ffff00"/><rect x="4" y="7" width="1" height="1" fill="#ffff00"/><rect x="6" y="7" width="1" height="1" fill="#ffff00"/><rect x="8" y="7" width="1" height="1" fill="#ffff00"/><rect x="0" y="3" width="3" height="3" fill="#ffff00"/><rect x="4" y="3" width="3" height="3" fill="#ffff00"/><rect x="8" y="3" width="2" height="3" fill="#ffff00"/></svg>
<div class="t" style="left:345px;top:232px;color:#000;">Clip______________</div>
<div class="t" style="left:498px;top:232px;color:#000;">avi</div>
<div class="t" style="left:534px;top:232px;color:#000;">   2M</div>
<div class="t" style="left:570px;top:232px;color:#000;">20.05.00</div>
<svg width="10" height="9" viewBox="0 0 10 9" style="left:333px;top:243px;"><rect x="0" y="0" width="10" height="9" fill="#0000ff"/><rect x="1" y="1" width="1" height="1" fill="#ffff00"/><rect x="3" y="1" width="1" height="1" fill="#ffff00"/><rect x="5" y="1" width="1" height="1" fill="#ffff00"/><rect x="7" y="1" width="1" height="1" fill="#ffff00"/><rect x="9" y="1" width="1" height="1" fill="#ffff00"/><rect x="0" y="7" width="1" height="1" fill="#ffff00"/><rect x="2" y="7" width="1" height="1" fill="#ffff00"/><rect x="4" y="7" width="1" height="1" fill="#ffff00"/><rect x="6" y="7" width="1" height="1" fill="#ffff00"/><rect x="8" y="7" width="1" height="1" fill="#ffff00"/><rect x="0" y="3" width="3" height="3" fill="#ffff00"/><rect x="4" y="3" width="3" height="3" fill="#ffff00"/><rect x="8" y="3" width="2" height="3" fill="#ffff00"/></svg>
<div class="t" style="left:345px;top:242px;color:#000;">Ekranizaciya_____</div>
<div class="t" style="left:498px;top:242px;color:#000;">avi</div>
<div class="t" style="left:534px;top:242px;color:#000;">   9M</div>
<div class="t" style="left:570px;top:242px;color:#000;">31.12.07</div>
<svg width="10" height="9" viewBox="0 0 10 9" style="left:333px;top:253px;"><rect x="0" y="0" width="10" height="9" fill="#0000ff"/><rect x="1" y="1" width="1" height="1" fill="#ffff00"/><rect x="3" y="1" width="1" height="1" fill="#ffff00"/><rect x="5" y="1" width="1" height="1" fill="#ffff00"/><rect x="7" y="1" width="1" height="1" fill="#ffff00"/><rect x="9" y="1" width="1" height="1" fill="#ffff00"/><rect x="0" y="7" width="1" height="1" fill="#ffff00"/><rect x="2" y="7" width="1" height="1" fill="#ffff00"/><rect x="4" y="7" width="1" height="1" fill="#ffff00"/><rect x="6" y="7" width="1" height="1" fill="#ffff00"/><rect x="8" y="7" width="1" height="1" fill="#ffff00"/><rect x="0" y="3" width="3" height="3" fill="#ffff00"/><rect x="4" y="3" width="3" height="3" fill="#ffff00"/><rect x="8" y="3" width="2" height="3" fill="#ffff00"/></svg>
<div class="t" style="left:345px;top:252px;color:#000;">Giper_____________</div>
<div class="t" style="left:498px;top:252px;color:#000;">avi</div>
<div class="t" style="left:534px;top:252px;color:#000;">  22M</div>
<div class="t" style="left:570px;top:252px;color:#000;">03.12.04</div>
<svg width="10" height="9" viewBox="0 0 10 9" style="left:333px;top:263px;"><rect x="0" y="0" width="10" height="9" fill="#0000ff"/><rect x="1" y="1" width="1" height="1" fill="#ffff00"/><rect x="3" y="1" width="1" height="1" fill="#ffff00"/><rect x="5" y="1" width="1" height="1" fill="#ffff00"/><rect x="7" y="1" width="1" height="1" fill="#ffff00"/><rect x="9" y="1" width="1" height="1" fill="#ffff00"/><rect x="0" y="7" width="1" height="1" fill="#ffff00"/><rect x="2" y="7" width="1" height="1" fill="#ffff00"/><rect x="4" y="7" width="1" height="1" fill="#ffff00"/><rect x="6" y="7" width="1" height="1" fill="#ffff00"/><rect x="8" y="7" width="1" height="1" fill="#ffff00"/><rect x="0" y="3" width="3" height="3" fill="#ffff00"/><rect x="4" y="3" width="3" height="3" fill="#ffff00"/><rect x="8" y="3" width="2" height="3" fill="#ffff00"/></svg>
<div class="t" style="left:345px;top:262px;color:#000;">Legenda __________ ____</div>
<div style="left:485px;top:268px;width:3px;height:2px;background:#f00"></div>
<div style="left:491px;top:268px;width:3px;height:2px;background:#f00"></div>
<div class="t" style="left:498px;top:262px;color:#000;">avi</div>
<div class="t" style="left:534px;top:262px;color:#000;">  13M</div>
<div class="t" style="left:570px;top:262px;color:#000;">20.05.00</div>
<svg width="10" height="9" viewBox="0 0 10 9" style="left:333px;top:273px;"><rect x="0" y="0" width="10" height="9" fill="#0000ff"/><rect x="1" y="1" width="1" height="1" fill="#ffff00"/><rect x="3" y="1" width="1" height="1" fill="#ffff00"/><rect x="5" y="1" width="1" height="1" fill="#ffff00"/><rect x="7" y="1" width="1" height="1" fill="#ffff00"/><rect x="9" y="1" width="1" height="1" fill="#ffff00"/><rect x="0" y="7" width="1" height="1" fill="#ffff00"/><rect x="2" y="7" width="1" height="1" fill="#ffff00"/><rect x="4" y="7" width="1" height="1" fill="#ffff00"/><rect x="6" y="7" width="1" height="1" fill="#ffff00"/><rect x="8" y="7" width="1" height="1" fill="#ffff00"/><rect x="0" y="3" width="3" height="3" fill="#ffff00"/><rect x="4" y="3" width="3" height="3" fill="#ffff00"/><rect x="8" y="3" width="2" height="3" fill="#ffff00"/></svg>
<div class="t" style="left:345px;top:272px;color:#000;">Lyuba - ________ ron</div>
<div class="t" style="left:498px;top:272px;color:#000;">avi</div>
<div class="t" style="left:534px;top:272px;color:#000;">  12M</div>
<div class="t" style="left:570px;top:272px;color:#000;">20.08.07</div>
<svg width="10" height="9" viewBox="0 0 10 9" style="left:333px;top:283px;"><rect x="0" y="0" width="10" height="9" fill="#0000ff"/><rect x="1" y="1" width="1" height="1" fill="#ffff00"/><rect x="3" y="1" width="1" height="1" fill="#ffff00"/><rect x="5" y="1" width="1" height="1" fill="#ffff00"/><rect x="7" y="1" width="1" height="1" fill="#ffff00"/><rect x="9" y="1" width="1" height="1" fill="#ffff00"/><rect x="0" y="7" width="1" height="1" fill="#ffff00"/><rect x="2" y="7" width="1" height="1" fill="#ffff00"/><rect x="4" y="7" width="1" height="1" fill="#ffff00"/><rect x="6" y="7" width="1" height="1" fill="#ffff00"/><rect x="8" y="7" width="1" height="1" fill="#ffff00"/><rect x="0" y="3" width="3" height="3" fill="#ffff00"/><rect x="4" y="3" width="3" height="3" fill="#ffff00"/><rect x="8" y="3" width="2" height="3" fill="#ffff00"/></svg>
<div class="t" style="left:345px;top:282px;color:#000;">Max_______________</div>
<div class="t" style="left:498px;top:282px;color:#000;">avi</div>
<div class="t" style="left:534px;top:282px;color:#000;">  56M</div>
<div class="t" style="left:570px;top:282px;color:#000;">02.01.07</div>
<svg width="10" height="9" viewBox="0 0 10 9" style="left:333px;top:293px;"><rect x="0" y="0" width="10" height="9" fill="#0000ff"/><rect x="1" y="1" width="1" height="1" fill="#ffff00"/><rect x="3" y="1" width="1" height="1" fill="#ffff00"/><rect x="5" y="1" width="1" height="1" fill="#ffff00"/><rect x="7" y="1" width="1" height="1" fill="#ffff00"/><rect x="9" y="1" width="1" height="1" fill="#ffff00"/><rect x="0" y="7" width="1" height="1" fill="#ffff00"/><rect x="2" y="7" width="1" height="1" fill="#ffff00"/><rect x="4" y="7" width="1" height="1" fill="#ffff00"/><rect x="6" y="7" width="1" height="1" fill="#ffff00"/><rect x="8" y="7" width="1" height="1" fill="#ffff00"/><rect x="0" y="3" width="3" height="3" fill="#ffff00"/><rect x="4" y="3" width="3" height="3" fill="#ffff00"/><rect x="8" y="3" width="2" height="3" fill="#ffff00"/></svg>
<div class="t" style="left:345px;top:292px;color:#000;">Menuet1</div>
<div class="t" style="left:498px;top:292px;color:#000;">avi</div>
<div class="t" style="left:534px;top:292px;color:#000;">   1M</div>
<div class="t" style="left:570px;top:292px;color:#000;">21.01.00</div>
<svg width="10" height="9" viewBox="0 0 10 9" style="left:333px;top:303px;"><rect x="0" y="0" width="10" height="9" fill="#0000ff"/><rect x="1" y="1" width="1" height="1" fill="#ffff00"/><rect x="3" y="1" width="1" height="1" fill="#ffff00"/><rect x="5" y="1" width="1" height="1" fill="#ffff00"/><rect x="7" y="1" width="1" height="1" fill="#ffff00"/><rect x="9" y="1" width="1" height="1" fill="#ffff00"/><rect x="0" y="7" width="1" height="1" fill="#ffff00"/><rect x="2" y="7" width="1" height="1" fill="#ffff00"/><rect x="4" y="7" width="1" height="1" fill="#ffff00"/><rect x="6" y="7" width="1" height="1" fill="#ffff00"/><rect x="8" y="7" width="1" height="1" fill="#ffff00"/><rect x="0" y="3" width="3" height="3" fill="#ffff00"/><rect x="4" y="3" width="3" height="3" fill="#ffff00"/><rect x="8" y="3" width="2" height="3" fill="#ffff00"/></svg>
<div class="t" style="left:345px;top:302px;color:#000;">Pretty fly(love hina - </div>
<div style="left:485px;top:308px;width:3px;height:2px;background:#f00"></div>
<div style="left:491px;top:308px;width:3px;height:2px;background:#f00"></div>
<div class="t" style="left:498px;top:302px;color:#000;">avi</div>
<div class="t" style="left:534px;top:302px;color:#000;">  14M</div>
<div class="t" style="left:570px;top:302px;color:#000;">01.03.07</div>
<svg width="10" height="9" viewBox="0 0 10 9" style="left:333px;top:313px;"><rect x="0" y="0" width="10" height="9" fill="#0000ff"/><rect x="1" y="1" width="1" height="1" fill="#ffff00"/><rect x="3" y="1" width="1" height="1" fill="#ffff00"/><rect x="5" y="1" width="1" height="1" fill="#ffff00"/><rect x="7" y="1" width="1" height="1" fill="#ffff00"/><rect x="9" y="1" width="1" height="1" fill="#ffff00"/><rect x="0" y="7" width="1" height="1" fill="#ffff00"/><rect x="2" y="7" width="1" height="1" fill="#ffff00"/><rect x="4" y="7" width="1" height="1" fill="#ffff00"/><rect x="6" y="7" width="1" height="1" fill="#ffff00"/><rect x="8" y="7" width="1" height="1" fill="#ffff00"/><rect x="0" y="3" width="3" height="3" fill="#ffff00"/><rect x="4" y="3" width="3" height="3" fill="#ffff00"/><rect x="8" y="3" width="2" height="3" fill="#ffff00"/></svg>
<div class="t" style="left:345px;top:312px;color:#000;">Rentv</div>
<div class="t" style="left:498px;top:312px;color:#000;">avi</div>
<svg width="10" height="9" viewBox="0 0 10 9" style="left:333px;top:323px;"><rect x="0" y="0" width="10" height="9" fill="#0000ff"/><rect x="1" y="1" width="1" height="1" fill="#ffff00"/><rect x="3" y="1" width="1" height="1" fill="#ffff00"/><rect x="5" y="1" width="1" height="1" fill="#ffff00"/><rect x="7" y="1" width="1" height="1" fill="#ffff00"/><rect x="9" y="1" width="1" height="1" fill="#ffff00"/><rect x="0" y="7" width="1" height="1" fill="#ffff00"/><rect x="2" y="7" width="1" height="1" fill="#ffff00"/><rect x="4" y="7" width="1" height="1" fill="#ffff00"/><rect x="6" y="7" width="1" height="1" fill="#ffff00"/><rect x="8" y="7" width="1" height="1" fill="#ffff00"/><rect x="0" y="3" width="3" height="3" fill="#ffff00"/><rect x="4" y="3" width="3" height="3" fill="#ffff00"/><rect x="8" y="3" width="2" height="3" fill="#ffff00"/></svg>
<div class="t" style="left:345px;top:322px;color:#000;">Stk_ah_640x480</div>
<div class="t" style="left:498px;top:322px;color:#000;">avi</div>
<svg width="10" height="9" viewBox="0 0 10 9" style="left:333px;top:333px;"><rect x="0" y="0" width="10" height="9" fill="#0000ff"/><rect x="1" y="1" width="1" height="1" fill="#ffff00"/><rect x="3" y="1" width="1" height="1" fill="#ffff00"/><rect x="5" y="1" width="1" height="1" fill="#ffff00"/><rect x="7" y="1" width="1" height="1" fill="#ffff00"/><rect x="9" y="1" width="1" height="1" fill="#ffff00"/><rect x="0" y="7" width="1" height="1" fill="#ffff00"/><rect x="2" y="7" width="1" height="1" fill="#ffff00"/><rect x="4" y="7" width="1" height="1" fill="#ffff00"/><rect x="6" y="7" width="1" height="1" fill="#ffff00"/><rect x="8" y="7" width="1" height="1" fill="#ffff00"/><rect x="0" y="3" width="3" height="3" fill="#ffff00"/><rect x="4" y="3" width="3" height="3" fill="#ffff00"/><rect x="8" y="3" width="2" height="3" fill="#ffff00"/></svg>
<div class="t" style="left:345px;top:332px;color:#000;">The_fall_character_movi</div>
<div style="left:485px;top:338px;width:3px;height:2px;background:#f00"></div>
<div style="left:491px;top:338px;width:3px;height:2px;background:#f00"></div>
<div class="t" style="left:498px;top:332px;color:#000;">avi</div>
<svg width="10" height="9" viewBox="0 0 10 9" style="left:333px;top:343px;"><rect x="0" y="0" width="10" height="9" fill="#0000ff"/><rect x="1" y="1" width="1" height="1" fill="#ffff00"/><rect x="3" y="1" width="1" height="1" fill="#ffff00"/><rect x="5" y="1" width="1" height="1" fill="#ffff00"/><rect x="7" y="1" width="1" height="1" fill="#ffff00"/><rect x="9" y="1" width="1" height="1" fill="#ffff00"/><rect x="0" y="7" width="1" height="1" fill="#ffff00"/><rect x="2" y="7" width="1" height="1" fill="#ffff00"/><rect x="4" y="7" width="1" height="1" fill="#ffff00"/><rect x="6" y="7" width="1" height="1" fill="#ffff00"/><rect x="8" y="7" width="1" height="1" fill="#ffff00"/><rect x="0" y="3" width="3" height="3" fill="#ffff00"/><rect x="4" y="3" width="3" height="3" fill="#ffff00"/><rect x="8" y="3" width="2" height="3" fill="#ffff00"/></svg>
<div class="t" style="left:345px;top:342px;color:#000;">_____-_______ ________</div>
<div class="t" style="left:498px;top:342px;color:#000;">avi</div>
<svg width="10" height="9" viewBox="0 0 10 9" style="left:333px;top:353px;"><rect x="0" y="0" width="10" height="9" fill="#000"/><rect x="1" y="1" width="4" height="7" fill="#00ff00"/><rect x="5" y="1" width="4" height="7" fill="#0000ff"/><path d="M1,1 H9 V2 L5,5.5 L1,2 Z" fill="#ff0000"/></svg>
<div class="t" style="left:345px;top:352px;color:#000;">Noname</div>
<svg width="10" height="9" viewBox="0 0 10 9" style="left:333px;top:363px;"><rect x="0" y="0" width="10" height="9" fill="#000"/><rect x="1" y="1" width="4" height="7" fill="#00ff00"/><rect x="5" y="1" width="4" height="7" fill="#0000ff"/><path d="M1,1 H9 V2 L5,5.5 L1,2 Z" fill="#ff0000"/></svg>
<div class="t" style="left:345px;top:362px;color:#000;">Heteronexion</div>
<svg width="10" height="9" viewBox="0 0 10 9" style="left:333px;top:373px;"><rect x="0" y="0" width="10" height="9" fill="#000"/><rect x="1" y="1" width="4" height="7" fill="#00ff00"/><rect x="5" y="1" width="4" height="7" fill="#0000ff"/><path d="M1,1 H9 V2 L5,5.5 L1,2 Z" fill="#ff0000"/></svg>
<div class="t" style="left:345px;top:372px;color:#000;">Background</div>
<div style="left:25px;top:442px;width:611px;height:3px;background:#c8c8c8"></div>
<div style="left:25px;top:445px;width:611px;height:12px;background:#fffbd8"></div>
<div class="t" style="left:27px;top:447px;color:#000;">/rd/1</div>
<div style="left:25px;top:460px;width:50px;height:16px;background:linear-gradient(#0cb40c,#00a000 50%,#009000)"></div>
<div style="left:25px;top:460px;width:10px;height:15px;background:#6464f8"></div>
<div class="t b8" style="left:25px;top:463px">1</div>
<div class="t b8" style="left:39px;top:463px">Help</div>
<div style="left:76px;top:460px;width:50px;height:16px;background:linear-gradient(#0cb40c,#00a000 50%,#009000)"></div>
<div style="left:76px;top:460px;width:10px;height:15px;background:#6464f8"></div>
<div class="t b8" style="left:76px;top:463px">2</div>
<div style="left:127px;top:460px;width:50px;height:16px;background:linear-gradient(#0cb40c,#00a000 50%,#009000)"></div>
<div style="left:127px;top:460px;width:10px;height:15px;background:#6464f8"></div>
<div class="t b8" style="left:127px;top:463px">3</div>
<div class="t b8" style="left:141px;top:463px">View</div>
<div style="left:178px;top:460px;width:50px;height:16px;background:linear-gradient(#0cb40c,#00a000 50%,#009000)"></div>
<div style="left:178px;top:460px;width:10px;height:15px;background:#6464f8"></div>
<div class="t b8" style="left:178px;top:463px">4</div>
<div class="t b8" style="left:192px;top:463px">Edit</div>
<div style="left:229px;top:460px;width:50px;height:16px;background:linear-gradient(#0cb40c,#00a000 50%,#009000)"></div>
<div style="left:229px;top:460px;width:10px;height:15px;background:#6464f8"></div>
<div class="t b8" style="left:229px;top:463px">5</div>
<div class="t b8" style="left:243px;top:463px">Copy</div>
<div style="left:280px;top:460px;width:50px;height:16px;background:linear-gradient(#0cb40c,#00a000 50%,#009000)"></div>
<div style="left:280px;top:460px;width:10px;height:15px;background:#6464f8"></div>
<div class="t b8" style="left:280px;top:463px">6</div>
<div class="t b8" style="left:294px;top:463px">Move</div>
<div style="left:331px;top:460px;width:50px;height:16px;background:linear-gradient(#0cb40c,#00a000 50%,#009000)"></div>
<div style="left:331px;top:460px;width:10px;height:15px;background:#6464f8"></div>
<div class="t b8" style="left:331px;top:463px">7</div>
<div class="t b8" style="left:345px;top:463px">Dir</div>
<div style="left:382px;top:460px;width:50px;height:16px;background:linear-gradient(#0cb40c,#00a000 50%,#009000)"></div>
<div style="left:382px;top:460px;width:10px;height:15px;background:#6464f8"></div>
<div class="t b8" style="left:382px;top:463px">8</div>
<div class="t b8" style="left:396px;top:463px">Del</div>
<div style="left:433px;top:460px;width:50px;height:16px;background:linear-gradient(#0cb40c,#00a000 50%,#009000)"></div>
<div style="left:433px;top:460px;width:10px;height:15px;background:#6464f8"></div>
<div class="t b8" style="left:433px;top:463px">9</div>
<div style="left:484px;top:460px;width:50px;height:16px;background:linear-gradient(#0cb40c,#00a000 50%,#009000)"></div>
<div style="left:484px;top:460px;width:15px;height:15px;background:#6464f8"></div>
<div class="t b8" style="left:484px;top:463px">10</div>
<div style="left:205px;top:210px;width:251px;height:81px;background:#c4c4c4;border:1px solid #808080"></div>
<div style="left:206px;top:211px;width:249px;height:20px;background:linear-gradient(#f6f6f6,#e8e8e8 30%,#c4c4c4)"></div>
<div style="left:407px;top:211px;width:48px;height:6px;background:linear-gradient(#fafafa,#e0c8c8)"></div>
<div style="left:407px;top:217px;width:48px;height:14px;background:linear-gradient(#b87474,#dc8080)"></div>
<div style="left:406px;top:211px;width:1px;height:20px;background:#808080"></div>
<svg width="8" height="5" viewBox="0 0 8 5" style="left:414px;top:222px;"><rect x="0.5" y="0.5" width="6" height="3" fill="#fff" stroke="#707070"/></svg>
<svg width="9" height="9" viewBox="0 0 9 9" style="left:435px;top:217px;overflow:hidden"><path d="M0.6,0.6 L8.4,8.4 M8.4,0.6 L0.6,8.4" stroke="#707070" stroke-width="3.6"/><path d="M1.5,1.5 L7.5,7.5 M7.5,1.5 L1.5,7.5" stroke="#fff" stroke-width="1.7"/></svg>
<div style="left:209px;top:231px;width:242px;height:56px;background:#ff0000;border-top:1px solid #808080;border-left:1px solid #909090"></div>
<div class="t b7" style="left:214px;top:239px;text-shadow:none">Cpuid</div>
<div class="t b7" style="left:214px;top:259px;text-shadow:none">File system error</div>
<div class="t b8" style="left:345px;top:259px;text-shadow:none">0000000005</div>
<svg width="12" height="17" viewBox="0 0 12 17" style="left:842px;top:271px;"><path d="M0,0 L0,13.5 L3.2,10.5 L6,16 L8.3,15 L5.6,9.6 L9.6,9.6 Z" fill="#f8f8f8" stroke="#000" stroke-width="0.6"/></svg>
<div style="left:499px;top:309px;width:525px;height:431px;background:#a0a0a0;border:1px solid #000"></div>
<div style="left:500px;top:310px;width:523px;height:20px;background:linear-gradient(#f4f4f4,#d8d8d8 30%,#8c8c8c)"></div>
<div class="t" style="left:503px;top:316px;color:#000;">Processes - Ctrl/Alt/Del</div>
<div style="left:975px;top:310px;width:48px;height:6px;background:linear-gradient(#fafafa,#e0c0c0)"></div>
<div style="left:975px;top:316px;width:48px;height:14px;background:linear-gradient(#780000,#c00000)"></div>
<div style="left:974px;top:310px;width:1px;height:20px;background:#000"></div>
<svg width="8" height="5" viewBox="0 0 8 5" style="left:982px;top:321px;"><rect x="0.5" y="0.5" width="6" height="3" fill="#fff" stroke="#000"/></svg>
<svg width="9" height="9" viewBox="0 0 9 9" style="left:1003px;top:316px;overflow:hidden"><path d="M0.6,0.6 L8.4,8.4 M8.4,0.6 L0.6,8.4" stroke="#000" stroke-width="3.6"/><path d="M1.5,1.5 L7.5,7.5 M7.5,1.5 L1.5,7.5" stroke="#fff" stroke-width="1.7"/></svg>
<div style="left:500px;top:330px;width:523px;height:1px;background:#000"></div>
<div style="left:500px;top:331px;width:3px;height:404px;background:linear-gradient(90deg,#b8b8b8,#909090)"></div>
<div style="left:1020px;top:331px;width:3px;height:404px;background:linear-gradient(90deg,#909090,#b8b8b8)"></div>
<div style="left:503px;top:331px;width:1px;height:405px;background:#000"></div>
<div style="left:1019px;top:331px;width:1px;height:405px;background:#000"></div>
<div style="left:500px;top:736px;width:523px;height:3px;background:#909090"></div>
<div style="left:503px;top:735px;width:517px;height:1px;background:#000"></div>
<div style="left:504px;top:331px;width:515px;height:404px;background:#e0ffe0"></div>
<div class="t" style="left:520px;top:343px;color:#000;">NAME/TERMINATE</div>
<div class="t" style="left:640px;top:343px;color:#000;">PID</div>
<div class="t" style="left:688px;top:343px;color:#000;">CPU-USAGE</div>
<div class="t" style="left:754px;top:343px;color:#000;">%</div>
<div class="t" style="left:778px;top:343px;color:#000;">MEMORY START/USAGE</div>
<div class="t" style="left:899px;top:343px;color:#000;">W-STACK</div>
<div class="t" style="left:964px;top:343px;color:#000;">W-SIZE</div>
<div style="left:514px;top:363px;width:100px;height:10px;background:linear-gradient(#c8d4e2,#b8c6d4 15%,#a8b6c4);border-left:1px solid #c8d8ee"></div>
<div style="left:614px;top:363px;width:395px;height:10px;background:#90ff90"></div>
<div style="left:514px;top:373px;width:100px;height:10px;background:linear-gradient(#9eacba,#8896a6)"></div>
<div style="left:514px;top:383px;width:100px;height:10px;background:linear-gradient(#c8d4e2,#b8c6d4 15%,#a8b6c4);border-left:1px solid #c8d8ee"></div>
<div style="left:614px;top:383px;width:395px;height:10px;background:#90ff90"></div>
<div style="left:514px;top:393px;width:100px;height:10px;background:linear-gradient(#9eacba,#8896a6)"></div>
<div style="left:514px;top:403px;width:100px;height:10px;background:linear-gradient(#c8d4e2,#b8c6d4 15%,#a8b6c4);border-left:1px solid #c8d8ee"></div>
<div style="left:614px;top:403px;width:395px;height:10px;background:#90ff90"></div>
<div style="left:514px;top:413px;width:100px;height:10px;background:linear-gradient(#9eacba,#8896a6)"></div>
<div style="left:514px;top:423px;width:100px;height:10px;background:linear-gradient(#c8d4e2,#b8c6d4 15%,#a8b6c4);border-left:1px solid #c8d8ee"></div>
<div style="left:614px;top:423px;width:395px;height:10px;background:#90ff90"></div>
<div style="left:514px;top:433px;width:100px;height:10px;background:linear-gradient(#9eacba,#8896a6)"></div>
<div style="left:514px;top:443px;width:100px;height:10px;background:linear-gradient(#c8d4e2,#b8c6d4 15%,#a8b6c4);border-left:1px solid #c8d8ee"></div>
<div style="left:614px;top:443px;width:395px;height:10px;background:#90ff90"></div>
<div style="left:514px;top:453px;width:100px;height:10px;background:linear-gradient(#9eacba,#8896a6)"></div>
<div style="left:514px;top:463px;width:100px;height:10px;background:linear-gradient(#c8d4e2,#b8c6d4 15%,#a8b6c4);border-left:1px solid #c8d8ee"></div>
<div style="left:614px;top:463px;width:395px;height:10px;background:#90ff90"></div>
<div style="left:514px;top:473px;width:100px;height:10px;background:linear-gradient(#9eacba,#8896a6)"></div>
<div style="left:514px;top:483px;width:100px;height:10px;background:linear-gradient(#c8d4e2,#b8c6d4 15%,#a8b6c4);border-left:1px solid #c8d8ee"></div>
<div style="left:614px;top:483px;width:395px;height:10px;background:#90ff90"></div>
<div style="left:514px;top:493px;width:100px;height:10px;background:linear-gradient(#9eacba,#8896a6)"></div>
<div style="left:514px;top:503px;width:100px;height:10px;background:linear-gradient(#c8d4e2,#b8c6d4 15%,#a8b6c4);border-left:1px solid #c8d8ee"></div>
<div style="left:614px;top:503px;width:395px;height:10px;background:#90ff90"></div>
<div style="left:514px;top:513px;width:100px;height:10px;background:linear-gradient(#9eacba,#8896a6)"></div>
<div style="left:514px;top:523px;width:100px;height:10px;background:linear-gradient(#c8d4e2,#b8c6d4 15%,#a8b6c4);border-left:1px solid #c8d8ee"></div>
<div style="left:614px;top:523px;width:395px;height:10px;background:#90ff90"></div>
<div style="left:514px;top:533px;width:100px;height:10px;background:linear-gradient(#9eacba,#8896a6)"></div>
<div style="left:514px;top:543px;width:100px;height:10px;background:linear-gradient(#c8d4e2,#b8c6d4 15%,#a8b6c4);border-left:1px solid #c8d8ee"></div>
<div style="left:614px;top:543px;width:395px;height:10px;background:#90ff90"></div>
<div style="left:514px;top:553px;width:100px;height:10px;background:linear-gradient(#9eacba,#8896a6)"></div>
<div style="left:514px;top:563px;width:100px;height:10px;background:linear-gradient(#c8d4e2,#b8c6d4 15%,#a8b6c4);border-left:1px solid #c8d8ee"></div>
<div style="left:614px;top:563px;width:395px;height:10px;background:#90ff90"></div>
<div style="left:514px;top:573px;width:100px;height:10px;background:linear-gradient(#9eacba,#8896a6)"></div>
<div style="left:514px;top:583px;width:100px;height:10px;background:linear-gradient(#c8d4e2,#b8c6d4 15%,#a8b6c4);border-left:1px solid #c8d8ee"></div>
<div style="left:614px;top:583px;width:395px;height:10px;background:#90ff90"></div>
<div style="left:514px;top:593px;width:100px;height:10px;background:linear-gradient(#9eacba,#8896a6)"></div>
<div style="left:514px;top:603px;width:100px;height:10px;background:linear-gradient(#c8d4e2,#b8c6d4 15%,#a8b6c4);border-left:1px solid #c8d8ee"></div>
<div style="left:614px;top:603px;width:395px;height:10px;background:#90ff90"></div>
<div style="left:514px;top:613px;width:100px;height:10px;background:linear-gradient(#9eacba,#8896a6)"></div>
<div style="left:514px;top:623px;width:100px;height:10px;background:linear-gradient(#c8d4e2,#b8c6d4 15%,#a8b6c4);border-left:1px solid #c8d8ee"></div>
<div style="left:614px;top:623px;width:395px;height:10px;background:#90ff90"></div>
<div style="left:514px;top:633px;width:100px;height:10px;background:linear-gradient(#9eacba,#8896a6)"></div>
<div style="left:514px;top:643px;width:100px;height:10px;background:linear-gradient(#c8d4e2,#b8c6d4 15%,#a8b6c4);border-left:1px solid #c8d8ee"></div>
<div style="left:614px;top:643px;width:395px;height:10px;background:#90ff90"></div>
<div style="left:514px;top:653px;width:100px;height:10px;background:linear-gradient(#9eacba,#8896a6)"></div>
<div style="left:514px;top:663px;width:100px;height:10px;background:linear-gradient(#c8d4e2,#b8c6d4 15%,#a8b6c4);border-left:1px solid #c8d8ee"></div>
<div style="left:614px;top:663px;width:395px;height:10px;background:#90ff90"></div>
<div style="left:514px;top:673px;width:100px;height:10px;background:linear-gradient(#9eacba,#8896a6)"></div>
<div class="t" style="left:519px;top:363px;color:#c80000;">01</div>
<div class="t" style="left:549px;top:363px;color:#c80000;">OS/IDLE</div>
<div class="t" style="left:628px;top:363px;color:#c80000;">00000001</div>
<div class="t" style="left:688px;top:363px;color:#c80000;">A91D0679</div>
<div class="t" style="left:748px;top:363px;color:#c80000;">839</div>
<div class="t" style="left:778px;top:363px;color:#c80000;">00000000</div>
<div class="t" style="left:838px;top:363px;color:#c80000;">01000000</div>
<div class="t" style="left:898px;top:363px;color:#c80000;">00100003</div>
<div class="t" style="left:958px;top:363px;color:#c80000;">00000000</div>
<div class="t" style="left:519px;top:373px;color:#000;">02</div>
<div class="t" style="left:549px;top:373px;color:#000;">KFM</div>
<div class="t" style="left:628px;top:373px;color:#000;">00000032</div>
<div class="t" style="left:688px;top:373px;color:#000;">00000000</div>
<div class="t" style="left:748px;top:373px;color:#000;">000</div>
<div class="t" style="left:778px;top:373px;color:#000;">00000000</div>
<div class="t" style="left:838px;top:373px;color:#000;">0001A000</div>
<div class="t" style="left:898px;top:373px;color:#000;">00180025</div>
<div class="t" style="left:958px;top:373px;color:#000;">00CD00D2</div>
<div class="t" style="left:519px;top:383px;color:#087808;">05</div>
<div class="t" style="left:549px;top:383px;color:#087808;">@PANEL</div>
<div class="t" style="left:628px;top:383px;color:#087808;">00000008</div>
<div class="t" style="left:688px;top:383px;color:#087808;">00359E1F</div>
<div class="t" style="left:748px;top:383px;color:#087808;">001</div>
<div class="t" style="left:778px;top:383px;color:#087808;">00000000</div>
<div class="t" style="left:838px;top:383px;color:#087808;">0000A000</div>
<div class="t" style="left:898px;top:383px;color:#087808;">00040023</div>
<div class="t" style="left:958px;top:383px;color:#087808;">000002ED</div>
<div class="t" style="left:519px;top:393px;color:#087808;">07</div>
<div class="t" style="left:549px;top:393px;color:#087808;">BOARD</div>
<div class="t" style="left:628px;top:393px;color:#087808;">00000029</div>
<div class="t" style="left:688px;top:393px;color:#087808;">00EE7055</div>
<div class="t" style="left:748px;top:393px;color:#087808;">004</div>
<div class="t" style="left:778px;top:393px;color:#087808;">00000000</div>
<div class="t" style="left:838px;top:393px;color:#087808;">00003434</div>
<div class="t" style="left:898px;top:393px;color:#087808;">000A0022</div>
<div class="t" style="left:958px;top:393px;color:#087808;">02700000</div>
<div class="t" style="left:519px;top:403px;color:#000;">09</div>
<div class="t" style="left:549px;top:403px;color:#000;">KFM</div>
<div class="t" style="left:628px;top:403px;color:#000;">0000002A</div>
<div class="t" style="left:688px;top:403px;color:#000;">00145817</div>
<div class="t" style="left:748px;top:403px;color:#000;">000</div>
<div class="t" style="left:778px;top:403px;color:#000;">00000000</div>
<div class="t" style="left:838px;top:403px;color:#000;">0001A000</div>
<div class="t" style="left:898px;top:403px;color:#000;">000C0024</div>
<div class="t" style="left:958px;top:403px;color:#000;">00140014</div>
<div class="t" style="left:519px;top:413px;color:#087808;">23</div>
<div class="t" style="left:549px;top:413px;color:#087808;">fplay_li</div>
<div class="t" style="left:628px;top:413px;color:#087808;">0000002F</div>
<div class="t" style="left:688px;top:413px;color:#087808;">00A43F51</div>
<div class="t" style="left:748px;top:413px;color:#087808;">003</div>
<div class="t" style="left:778px;top:413px;color:#087808;">00000000</div>
<div class="t" style="left:838px;top:413px;color:#087808;">08046000</div>
<div class="t" style="left:898px;top:413px;color:#087808;">0005001F</div>
<div class="t" style="left:958px;top:413px;color:#087808;">00000000</div>
<div class="t" style="left:519px;top:423px;color:#000;">24</div>
<div class="t" style="left:549px;top:423px;color:#000;">fplay_li</div>
<div class="t" style="left:628px;top:423px;color:#000;">00000030</div>
<div class="t" style="left:688px;top:423px;color:#000;">003316E7</div>
<div class="t" style="left:748px;top:423px;color:#000;">000</div>
<div class="t" style="left:778px;top:423px;color:#000;">00000000</div>
<div class="t" style="left:838px;top:423px;color:#000;">08046000</div>
<div class="t" style="left:898px;top:423px;color:#000;">00090020</div>
<div class="t" style="left:958px;top:423px;color:#000;">00000000</div>
<div class="t" style="left:519px;top:433px;color:#000;">26</div>
<div class="t" style="left:549px;top:433px;color:#000;">cpu</div>
<div class="t" style="left:628px;top:433px;color:#000;">0000002E</div>
<div class="t" style="left:688px;top:433px;color:#000;">00126F78</div>
<div class="t" style="left:748px;top:433px;color:#000;">000</div>
<div class="t" style="left:778px;top:433px;color:#000;">00000000</div>
<div class="t" style="left:838px;top:433px;color:#000;">00009000</div>
<div class="t" style="left:898px;top:433px;color:#000;">00260026</div>
<div class="t" style="left:958px;top:433px;color:#000;">01F30135</div>
<div style="left:514px;top:683px;width:100px;height:1px;background:#687890"></div>
<div style="left:529px;top:689px;width:97px;height:11px;background:linear-gradient(#ccd8e4,#98a8b8);border-bottom:1px solid #8090a0;border-right:1px solid #8090a0"></div>
<div class="t" style="left:548px;top:690px;color:#000;">PREV PAGE</div>
<div style="left:629px;top:689px;width:97px;height:11px;background:linear-gradient(#ccd8e4,#98a8b8);border-bottom:1px solid #8090a0;border-right:1px solid #8090a0"></div>
<div class="t" style="left:644px;top:690px;color:#000;">NEXT PAGE</div>
<div style="left:835px;top:689px;width:111px;height:11px;background:linear-gradient(#ccd8e4,#98a8b8);border-bottom:1px solid #8090a0;border-right:1px solid #8090a0"></div>
<div class="t" style="left:848px;top:690px;color:#000;">REBOOT SYSTEM</div>
<div style="left:955px;top:709px;width:51px;height:11px;background:linear-gradient(#ccd8e4,#98a8b8);border-bottom:1px solid #8090a0;border-right:1px solid #8090a0"></div>
<div class="t" style="left:973px;top:710px;color:#000;">RUN</div>
<div style="left:514px;top:709px;width:11px;height:11px;background:#808080;border:1px solid #707070;box-shadow:inset 0 0 0 1px #b8b8b8"></div>
<div class="t" style="left:531px;top:711px;color:#000;">@ on/off</div>
<div style="left:599px;top:707px;width:351px;height:15px;background:#f8f8f8;border:1px solid #a0a0a0"></div>
<div class="t" style="left:600px;top:709px;color:#000;">/sys/LAUNCHER</div>
<div style="left:678px;top:708px;width:1px;height:13px;background:#000"></div>
<div style="left:0px;top:749px;width:1024px;height:19px;background:linear-gradient(#d4d4d4 0,#d4d4d4 1px,#c6c6c6 1px,#c0c0c0 5px,#b0b0b0 6px,#b0b0b0 14px,#bcbcbc 15px)"></div>
<svg width="5" height="6" viewBox="0 0 5 6" style="left:2px;top:757px;"><path d="M5,0 L0,3 L5,6 Z" fill="#f0f0f0"/></svg>
<svg width="48" height="17" viewBox="0 0 48 17" style="left:12px;top:750px;"><path d="M0.5,0.5 H43.5 C46,2 47,5 47,8.5 C47,12 46,15 43.5,16.5 H0.5 Z" fill="#007a1a" stroke="#404040"/></svg>
<div class="t b8" style="left:17px;top:755px;text-shadow:none">МЕНЮ</div>
<div style="left:67px;top:752px;width:14px;height:14px;background:linear-gradient(#e4e4e4,#c4c4c4);border-left:1px solid #f0f0f0;border-top:1px solid #f0f0f0"></div>
<svg width="14" height="14" viewBox="0 0 14 14" style="left:67px;top:752px;"><path d="M7,2 V11 M4,8 L7,11 L10,8" stroke="#000" stroke-width="1.2" fill="none"/></svg>
<div style="left:86px;top:752px;width:14px;height:14px;background:linear-gradient(#e4e4e4,#c4c4c4);border-left:1px solid #f0f0f0;border-top:1px solid #f0f0f0"></div>
<svg width="14" height="14" viewBox="0 0 14 14" style="left:86px;top:752px;"><path d="M7,12 V3 M4,6 L7,3 L10,6" stroke="#000" stroke-width="1.2" fill="none"/></svg>
<div style="left:105px;top:752px;width:14px;height:14px;background:linear-gradient(#e4e4e4,#c4c4c4);border-left:1px solid #f0f0f0;border-top:1px solid #f0f0f0"></div>
<svg width="14" height="14" viewBox="0 0 14 14" style="left:105px;top:752px;"><path d="M7,3 V11 M4.5,5.5 L7,3 L9.5,5.5 M4.5,8.5 L7,11 L9.5,8.5" stroke="#000" stroke-width="1.2" fill="none"/></svg>
<svg width="58" height="14" viewBox="0 0 58 14" style="left:125px;top:752px;"><path d="M3.5,0.5 H54.5 L57.5,3.5 V10.5 L54.5,13.5 H3.5 L0.5,10.5 V3.5 Z" fill="#c8c8c8" stroke="#404040"/></svg>
<div class="t" style="left:129px;top:755px;color:#000;">KFM</div>
<svg width="58" height="14" viewBox="0 0 58 14" style="left:185px;top:752px;"><path d="M3.5,0.5 H54.5 L57.5,3.5 V10.5 L54.5,13.5 H3.5 L0.5,10.5 V3.5 Z" fill="#c8c8c8" stroke="#404040"/></svg>
<div class="t" style="left:189px;top:755px;color:#000;">BOARD</div>
<svg width="58" height="14" viewBox="0 0 58 14" style="left:245px;top:752px;"><path d="M3.5,0.5 H54.5 L57.5,3.5 V10.5 L54.5,13.5 H3.5 L0.5,10.5 V3.5 Z" fill="#c8c8c8" stroke="#404040"/></svg>
<div class="t" style="left:249px;top:755px;color:#000;">KFM</div>
<svg width="58" height="14" viewBox="0 0 58 14" style="left:305px;top:752px;"><path d="M3.5,0.5 H54.5 L57.5,3.5 V10.5 L54.5,13.5 H3.5 L0.5,10.5 V3.5 Z" fill="#c8c8c8" stroke="#404040"/></svg>
<div class="t" style="left:309px;top:755px;color:#000;">cpu</div>
<div style="left:882px;top:755px;width:9px;height:11px;background:#fff;border:1px solid #000"></div>
<div class="t" style="left:883px;top:755px;color:#000;font-weight:bold">&lt;</div>
<div class="t" style="left:893px;top:755px;color:#e8e8e8;">00</div>
<div style="left:906px;top:755px;width:9px;height:11px;background:#fff;border:1px solid #000"></div>
<div class="t" style="left:907px;top:755px;color:#000;font-weight:bold">&gt;</div>
<div style="left:917px;top:753px;width:12px;height:13px;background:#ffcc00;border:1px solid #000"></div>
<div class="t" style="left:919px;top:754px;color:#000;font-weight:bold;font-size:11px">S</div>
<div style="left:931px;top:753px;width:12px;height:13px;background:#1010e0;border:1px solid #000"></div>
<div style="left:933px;top:757px;width:7px;height:5px;background:#e0e000"></div>
<svg width="10" height="11" viewBox="0 0 10 11" style="left:932px;top:754px;"><path d="M1,1 L9,10 M9,1 L1,10" stroke="#ff0000" stroke-width="1.5"/></svg>
<div style="left:945px;top:753px;width:15px;height:13px;background:#0000e8;border:1px solid #000"></div>
<div class="t" style="left:947px;top:755px;color:#fff;">En</div>
<div style="left:963px;top:754px;width:8px;height:12px;background:#40b040"></div>
<div style="left:975px;top:752px;width:34px;height:14px;background:#0060e0;border:1px solid #000"></div>
<div class="t" style="left:978px;top:754px;color:#fff;font-size:10px;letter-spacing:-0.3px">23 00</div>
<svg width="6" height="6" viewBox="0 0 6 6" style="left:1016px;top:757px;"><path d="M0,0 L6,3 L0,6 Z" fill="#e8e8e8"/></svg>
</body></html>
